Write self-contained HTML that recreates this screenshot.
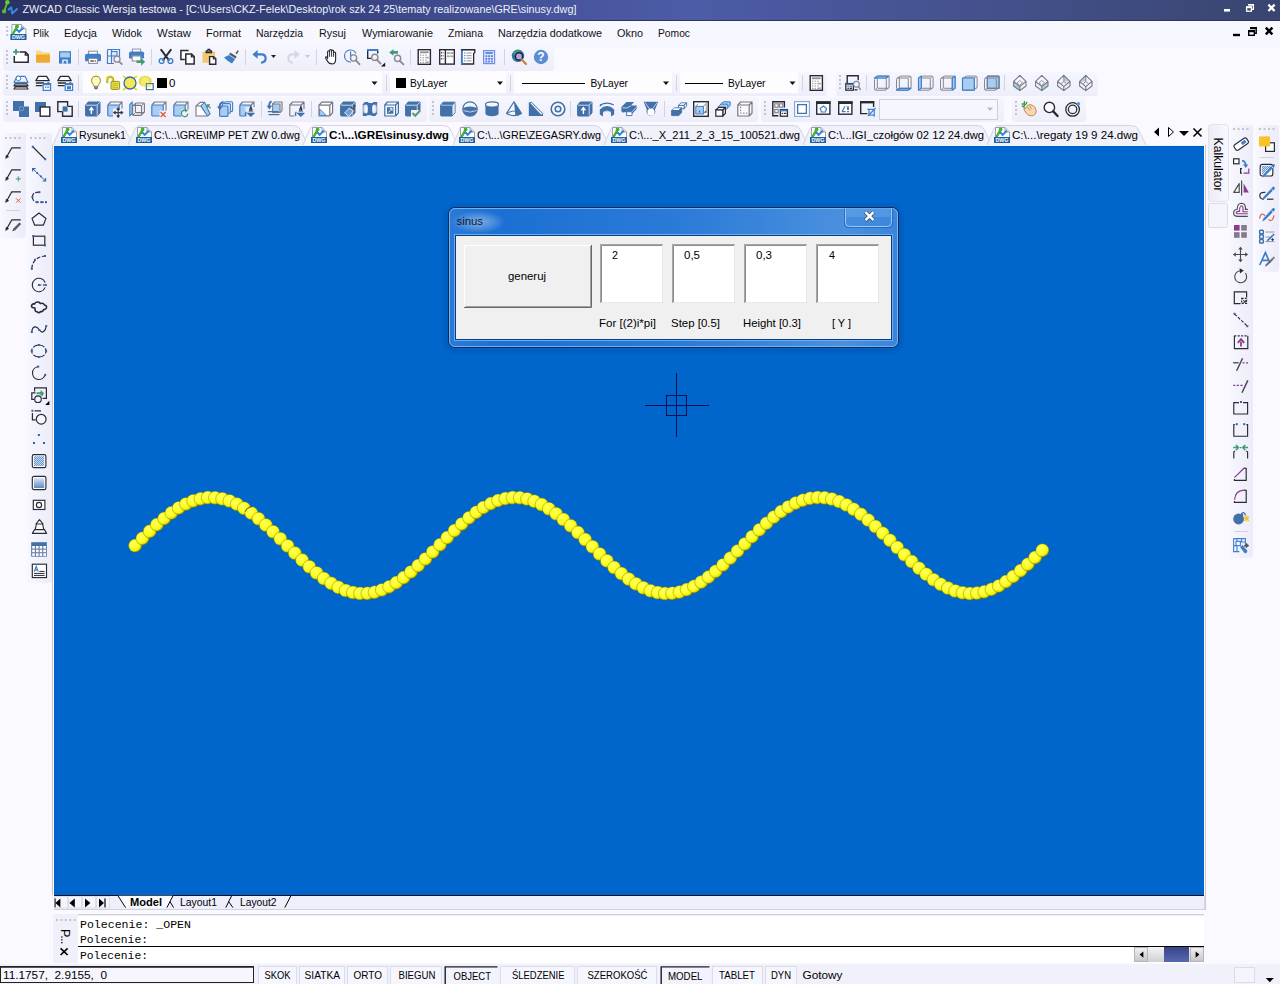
<!DOCTYPE html>
<html lang="pl"><head><meta charset="utf-8"><title>ZWCAD Classic - sinusy.dwg</title>
<style>
*{margin:0;padding:0;box-sizing:border-box}
html,body{width:1280px;height:984px;overflow:hidden;background:#f9f9ff;font-family:"Liberation Sans", sans-serif;font-size:11px}
#app{position:relative;width:1280px;height:984px;background:#f9f9ff;overflow:hidden}
#titlebar{position:absolute;left:0;top:0;width:1280px;height:21px;border-bottom:1px solid #2c3560;
  background:linear-gradient(90deg,#2a3262 0%,#333e78 22%,#45539a 42%,#4c5ca6 54%,#45528f 75%,#39456f 100%)}
#menubar{position:absolute;left:0;top:21px;width:1280px;height:26px;background:#f7f7ff}
.tb{position:absolute;background:#f0f0fb;border-radius:3px}
.tb.h{background:linear-gradient(180deg,#f6f6ff 0%,#eeeefa 100%)}
.tb.v{background:linear-gradient(90deg,#f7f7ff 0%,#ececf9 100%)}
#canvas{position:absolute;left:54px;top:146px;width:1150px;height:749px;background:#0066cc;
  border-top:1px solid #005cbe}
#overlay{position:absolute;left:0;top:0}
</style></head>
<body><div id="app">
<div id="titlebar"></div>
<div id="menubar"></div>
<div class="tb h" style="left:3px;top:46px;width:551px;height:25px;"></div>
<div class="tb h" style="left:3px;top:72px;width:824px;height:24px;"></div>
<div class="tb h" style="left:836px;top:72px;width:262px;height:24px;"></div>
<div class="tb h" style="left:3px;top:97px;width:424px;height:25px;"></div>
<div class="tb h" style="left:429px;top:97px;width:329px;height:25px;"></div>
<div class="tb h" style="left:761px;top:97px;width:243px;height:25px;"></div>
<div class="tb h" style="left:1012px;top:97px;width:74px;height:25px;"></div>
<div class="tb v" style="left:1px;top:133px;width:25px;height:105px;"></div>
<div class="tb v" style="left:27px;top:133px;width:25px;height:450px;"></div>
<div class="tb v" style="left:1230px;top:125px;width:23px;height:433px;"></div>
<div class="tb v" style="left:1256px;top:125px;width:23px;height:147px;"></div>
<div id="canvas"></div>
<svg id="overlay" width="1280" height="984" viewBox="0 0 1280 984">
<defs>
<radialGradient id="ball" cx="0.38" cy="0.36" r="0.70">
 <stop offset="0" stop-color="#ffff62"/><stop offset="0.5" stop-color="#ffff24"/>
 <stop offset="0.76" stop-color="#f0f010"/><stop offset="0.9" stop-color="#b4b010"/><stop offset="1" stop-color="#5c5a0e"/>
</radialGradient>
<linearGradient id="dlgframe" x1="0" y1="0" x2="1" y2="0">
 <stop offset="0" stop-color="#2a7ad8"/><stop offset="0.12" stop-color="#1c70d4"/><stop offset="0.5" stop-color="#2a7ad8"/>
 <stop offset="0.88" stop-color="#4a90de"/><stop offset="1" stop-color="#3a84da"/>
</linearGradient>
<linearGradient id="kal" x1="0" y1="0" x2="1" y2="0"><stop offset="0" stop-color="#ececf8"/><stop offset="1" stop-color="#f8f8ff"/></linearGradient>
<linearGradient id="sbbtn" x1="0" y1="0" x2="0" y2="1"><stop offset="0" stop-color="#f2f2f2"/><stop offset="1" stop-color="#c6c6ca"/></linearGradient>
<linearGradient id="sbtrack" x1="0" y1="0" x2="0" y2="1"><stop offset="0" stop-color="#f4f4f4"/><stop offset="1" stop-color="#d0d0d4"/></linearGradient>
<linearGradient id="sbthumb" x1="0" y1="0" x2="0" y2="1"><stop offset="0" stop-color="#37448a"/><stop offset="1" stop-color="#5868b0"/></linearGradient>
<radialGradient id="glow" cx="0.5" cy="0.5" r="0.5">
 <stop offset="0" stop-color="#fff" stop-opacity="0.42"/><stop offset="0.6" stop-color="#fff" stop-opacity="0.18"/><stop offset="1" stop-color="#fff" stop-opacity="0"/>
</radialGradient>
</defs>
<text x="22.4" y="13" font-size="11.5" fill="#eef0f8" font-weight="normal" font-family='"Liberation Sans", sans-serif' text-anchor="start" textLength="554" lengthAdjust="spacingAndGlyphs" >ZWCAD Classic Wersja testowa - [C:\Users\CKZ-Felek\Desktop\rok szk 24 25\tematy realizowane\GRE\sinusy.dwg]</text>
<g transform="translate(2,1)"><path d="M6.6 8.6 L9.2 6.3 L10.2 12.4 L15 8" fill="none" stroke="#2f8ae0" stroke-width="2" stroke-linejoin="round" stroke-linecap="round"/><path d="M2.2 10.2 L5.2 1.6" stroke="#62c030" stroke-width="1.8" stroke-linecap="round"/><circle cx="5.4" cy="1.3" r="2.2" fill="#6cc832"/><circle cx="2.1" cy="10.4" r="2.1" fill="#5cbc2c"/></g>
<rect x="1224" y="9" width="6" height="2.6" fill="#fff" rx="0" />
<path d="M1248.6 4.6 H1253.4 V9.4 H1251.6" fill="none" stroke="#fff" stroke-width="1.3" />
<rect x="1248" y="4" width="6" height="1.6" fill="#fff" rx="0" />
<rect x="1246.6" y="7" width="4.8" height="4.2" fill="none" stroke="#fff" stroke-width="1.3" rx="0" />
<rect x="1246" y="6.4" width="6" height="1.8" fill="#fff" rx="0" />
<path d="M1268.4 4.6 L1274.6 11 M1274.6 4.6 L1268.4 11" fill="none" stroke="#fff" stroke-width="2.3" />
<rect x="6.2" y="26" width="2" height="2" fill="#c3c3cd" rx="0" />
<rect x="6.2" y="30" width="2" height="2" fill="#c3c3cd" rx="0" />
<rect x="6.2" y="34" width="2" height="2" fill="#c3c3cd" rx="0" />
<g transform="translate(10.4,24)"><path d="M1.5 0.5 h9.5 l4.5 4.5 v10.5 h-14z" fill="#fff" stroke="#9aa0ad" stroke-width="1"/><path d="M11 0.5 v4.5 h4.5" fill="#e4e7ee" stroke="#9aa0ad" stroke-width="1"/><path d="M2.5 9.5 L6 4.5 L8.5 8 L13 3.5" fill="none" stroke="#2f86d8" stroke-width="1.8" stroke-linejoin="round"/><path d="M2.8 9.5 L6 3.5" stroke="#48b02c" stroke-width="2.2" stroke-linecap="round"/><circle cx="6.6" cy="2.4" r="1.9" fill="#48b02c"/><rect x="0" y="10" width="16" height="6" fill="#1c5fa6"/><text x="8" y="15.3" font-size="6.2" font-weight="bold" fill="#fff" text-anchor="middle" font-family='"Liberation Sans", sans-serif' textLength="13" lengthAdjust="spacingAndGlyphs">DWG</text></g>
<text x="33" y="37" font-size="11.5" fill="#111" font-weight="normal" font-family='"Liberation Sans", sans-serif' text-anchor="start" textLength="16" lengthAdjust="spacingAndGlyphs" >Plik</text>
<text x="64" y="37" font-size="11.5" fill="#111" font-weight="normal" font-family='"Liberation Sans", sans-serif' text-anchor="start" textLength="33" lengthAdjust="spacingAndGlyphs" >Edycja</text>
<text x="112" y="37" font-size="11.5" fill="#111" font-weight="normal" font-family='"Liberation Sans", sans-serif' text-anchor="start" textLength="30" lengthAdjust="spacingAndGlyphs" >Widok</text>
<text x="157" y="37" font-size="11.5" fill="#111" font-weight="normal" font-family='"Liberation Sans", sans-serif' text-anchor="start" textLength="34" lengthAdjust="spacingAndGlyphs" >Wstaw</text>
<text x="206" y="37" font-size="11.5" fill="#111" font-weight="normal" font-family='"Liberation Sans", sans-serif' text-anchor="start" textLength="35" lengthAdjust="spacingAndGlyphs" >Format</text>
<text x="256" y="37" font-size="11.5" fill="#111" font-weight="normal" font-family='"Liberation Sans", sans-serif' text-anchor="start" textLength="47" lengthAdjust="spacingAndGlyphs" >Narzędzia</text>
<text x="319" y="37" font-size="11.5" fill="#111" font-weight="normal" font-family='"Liberation Sans", sans-serif' text-anchor="start" textLength="27" lengthAdjust="spacingAndGlyphs" >Rysuj</text>
<text x="362" y="37" font-size="11.5" fill="#111" font-weight="normal" font-family='"Liberation Sans", sans-serif' text-anchor="start" textLength="71" lengthAdjust="spacingAndGlyphs" >Wymiarowanie</text>
<text x="448" y="37" font-size="11.5" fill="#111" font-weight="normal" font-family='"Liberation Sans", sans-serif' text-anchor="start" textLength="35" lengthAdjust="spacingAndGlyphs" >Zmiana</text>
<text x="498" y="37" font-size="11.5" fill="#111" font-weight="normal" font-family='"Liberation Sans", sans-serif' text-anchor="start" textLength="104" lengthAdjust="spacingAndGlyphs" >Narzędzia dodatkowe</text>
<text x="617" y="37" font-size="11.5" fill="#111" font-weight="normal" font-family='"Liberation Sans", sans-serif' text-anchor="start" textLength="26" lengthAdjust="spacingAndGlyphs" >Okno</text>
<text x="658" y="37" font-size="11.5" fill="#111" font-weight="normal" font-family='"Liberation Sans", sans-serif' text-anchor="start" textLength="32" lengthAdjust="spacingAndGlyphs" >Pomoc</text>
<rect x="1233" y="33.8" width="7" height="2.4" fill="#000" rx="0" />
<path d="M1250.6 27.8 H1256.2 V33.2 H1254.4" fill="none" stroke="#000" stroke-width="1.4" />
<rect x="1250" y="27" width="7" height="2.2" fill="#000" rx="0" />
<rect x="1248.7" y="30.7" width="5.6" height="4.6" fill="none" stroke="#000" stroke-width="1.4" rx="0" />
<rect x="1248" y="30" width="7" height="2.2" fill="#000" rx="0" />
<path d="M1265.8 27.6 L1272.4 34.4 M1272.4 27.6 L1265.8 34.4" fill="none" stroke="#000" stroke-width="2.5" />
<rect x="6" y="50" width="2" height="2" fill="#c3c3cd" rx="0" />
<rect x="6" y="54" width="2" height="2" fill="#c3c3cd" rx="0" />
<rect x="6" y="58" width="2" height="2" fill="#c3c3cd" rx="0" />
<rect x="6" y="62" width="2" height="2" fill="#c3c3cd" rx="0" />
<g transform="translate(13,49)"><path d="M6.5 3 H12.5 L15.2 5.7 V13.3 H1.3 V7" fill="#fff" stroke="#2a2a34" stroke-width="1.5"/><path d="M12.3 3 V6 H15.2" fill="none" stroke="#2a2a34" stroke-width="1.3"/><path d="M3 0 V5.6 M0.2 2.8 H5.8" stroke="#3f9d70" stroke-width="1.8"/></g>
<g transform="translate(35,49)"><path d="M1 2.4 q0-1 1-1 h3.6 l1.6 1.8 h6.8 q1 0 1 1 V13 H1z" fill="#fbd88a"/><path d="M1 5.6 h14 v7 q0 1.2-1.2 1.2 H2.2 q-1.2 0-1.2-1.2z" fill="#eea92f"/></g>
<g transform="translate(57,49)"><rect x="2" y="2.2" width="12" height="12.4" fill="#3f7fca"/><rect x="3.2" y="3.4" width="9.6" height="5" fill="#a9ccf2"/><rect x="5.2" y="10.6" width="5.6" height="4" fill="#f4f6fc"/><rect x="6.6" y="11.8" width="2.8" height="2.8" fill="#3f7fca"/></g>
<rect x="78" y="49" width="1" height="16" fill="#d3d3de" rx="0" />
<g transform="translate(85,49)"><rect x="3.6" y="2.2" width="8.8" height="5" fill="#fff" stroke="#8a8a94" stroke-width="1"/><path d="M0 6.6 q0-1.8 2-1.8 h12 q2 0 2 1.8 v4.6 q0 1-1 1 h-14 q-1 0-1-1z" fill="#3f7fca"/><rect x="3.6" y="9.4" width="8.8" height="5" fill="#fff" stroke="#8a8a94" stroke-width="1"/><rect x="5.4" y="11.4" width="3.4" height="1.2" fill="#2a2a34"/><rect x="9.6" y="11.4" width="1.2" height="1.2" fill="#2a2a34"/></g>
<g transform="translate(107,49)"><path d="M0.5 0.5 h12 v8 M7 14.5 h-6.5 v-14 M4.5 0.5 v14 M0.5 7 h4" fill="none" stroke="#3f7fca" stroke-width="1.2"/><rect x="4.5" y="2.5" width="5.5" height="4.5" fill="#d9e8fa" stroke="#3f7fca" stroke-width="1.1"/><circle cx="10" cy="10.2" r="3" fill="#f2f4fb" stroke="#8a8a94" stroke-width="1.3"/><path d="M12.2 12.6 L15.4 15.6" stroke="#8a8a94" stroke-width="1.8"/></g>
<g transform="translate(129,49)"><g transform="translate(0,-2) scale(0.94)"><rect x="3.6" y="2.2" width="8.8" height="5" fill="#fff" stroke="#8a8a94" stroke-width="1"/><path d="M0 6.6 q0-1.8 2-1.8 h12 q2 0 2 1.8 v4.6 q0 1-1 1 h-14 q-1 0-1-1z" fill="#3f7fca"/><rect x="3.6" y="9.4" width="8.8" height="5" fill="#fff" stroke="#8a8a94" stroke-width="1"/><rect x="5.4" y="11.4" width="3.4" height="1.2" fill="#2a2a34"/><rect x="9.6" y="11.4" width="1.2" height="1.2" fill="#2a2a34"/></g><rect x="3.2" y="7" width="8.6" height="5" fill="#fff" stroke="#8a8a94" stroke-width="1"/><path d="M7.5 11.5 h4.6 v-2.6 l4 3.9 l-4 3.9 v-2.6 h-4.6z" fill="#3f9d70"/></g>
<rect x="151" y="49" width="1" height="16" fill="#d3d3de" rx="0" />
<g transform="translate(158,49)"><path d="M3.2 0.8 L10.8 11 M12.8 0.8 L5.2 11" stroke="#2a2a34" stroke-width="2" stroke-linecap="round"/><circle cx="3.6" cy="12" r="2.4" fill="none" stroke="#3f7fca" stroke-width="1.4"/><circle cx="12.4" cy="12" r="2.4" fill="none" stroke="#3f7fca" stroke-width="1.4"/></g>
<g transform="translate(180,49)"><path d="M8.6 1.6 H0.9 V10.6 H4.8" fill="#fff" stroke="#2a2a34" stroke-width="1.5"/><path d="M5.8 5 H11.6 L14.2 7.6 V15 H5.8z" fill="#fff" stroke="#2a2a34" stroke-width="1.5"/><path d="M11.4 5 V7.8 H14.2" fill="none" stroke="#2a2a34" stroke-width="1.2"/></g>
<g transform="translate(202,49)"><rect x="0.5" y="2.4" width="12.6" height="11.4" rx="0.8" fill="#f3c873"/><path d="M4.4 3.6 V1.8 H6 V0.4 H7.8 V1.8 H9.4 V3.6z" fill="none" stroke="#2a2a34" stroke-width="1.3"/><rect x="3.6" y="2.6" width="6.6" height="1.4" fill="#2a2a34"/><path d="M7.6 7.6 H11.6 L13.8 9.8 V15.2 H7.6z" fill="#fff" stroke="#2a2a34" stroke-width="1.4"/><path d="M11.4 7.6 V10 H13.8" fill="none" stroke="#2a2a34" stroke-width="1.1"/></g>
<g transform="translate(224,49)"><path d="M11.4 4.2 L13.6 1.2 L14.8 2 L12.8 5.2z" fill="#55555f"/><path d="M6.2 3.6 L12.6 7.6 L11.6 9.4 L5.2 5.4z" fill="#55555f"/><path d="M4.8 6 L11.2 10 L8 14.6 Q4 13 0 8.6z" fill="#3f7fca"/></g>
<rect x="245" y="49" width="1" height="16" fill="#d3d3de" rx="0" />
<g transform="translate(252,49)"><path d="M3 5.4 H9.4 Q13.6 5.4 13.6 9.6 Q13.6 13.4 9 13.6" fill="none" stroke="#3f7fca" stroke-width="2.2"/><path d="M0.4 5.4 L5.6 1 V9.8z" fill="#3f7fca"/></g>
<g transform="translate(286,49)"><path d="M11 5.4 H6.6 Q2.4 5.4 2.4 9.6 Q2.4 13.4 7 13.6" fill="none" stroke="#d5d8e2" stroke-width="2.2"/><path d="M13.8 5.4 L8.6 1 V9.8z" fill="#d5d8e2"/></g>
<rect x="316" y="49" width="1" height="16" fill="#d3d3de" rx="0" />
<g transform="translate(323,49)"><path d="M4.6 9.6 V2.7 a1 1 0 0 1 2 0 V1.5 a1 1 0 0 1 2 0 V2.1 a1 1 0 0 1 2 0 V4 a1 1 0 0 1 2 0 V10.4 Q12.6 14.9 8.8 14.9 Q6 14.9 4.6 12.4 L2.7 9.2 Q2.3 8 3.3 7.7 Q4.1 7.7 4.6 9.6z" fill="#fff" stroke="#2a2a34" stroke-width="1.15" stroke-linejoin="round"/><path d="M6.6 2.7 V7.8 M8.6 1.8 V7.8 M10.6 4 V7.8" stroke="#2a2a34" stroke-width="0.95"/></g>
<g transform="translate(345,49)"><path d="M6 13 A6 6 0 1 1 11 4.6" fill="none" stroke="#3f7fca" stroke-width="1.2"/><path d="M5.6 2.6 V7 H8" fill="none" stroke="#3f7fca" stroke-width="1.2"/><circle cx="8.6" cy="9" r="3.1" fill="#f3f4fb" stroke="#8a8a94" stroke-width="1.4"/><path d="M10.9 11.4 L14.4 15.2" stroke="#8a8a94" stroke-width="1.9" stroke-linecap="round"/></g>
<g transform="translate(367,49)"><rect x="0" y="0" width="11.4" height="2" fill="#3f7fca"/><path d="M0.7 2 V9.4 H4.2 M10.7 2 V4.4" fill="none" stroke="#2a2a34" stroke-width="1.4"/><circle cx="7.8" cy="8.4" r="3.1" fill="#f3f4fb" stroke="#8a8a94" stroke-width="1.4"/><path d="M10.1 10.8 L13.6 14.6" stroke="#8a8a94" stroke-width="1.9" stroke-linecap="round"/></g>
<g transform="translate(389,49)"><path d="M0.2 3.4 L4.4 0 V2 H9 V4.8 H4.4 V6.8z" fill="#3f9d70"/><circle cx="8.6" cy="9.4" r="3.1" fill="#f3f4fb" stroke="#8a8a94" stroke-width="1.4"/><path d="M10.9 11.8 L14.4 15.4" stroke="#8a8a94" stroke-width="1.9" stroke-linecap="round"/></g>
<rect x="410" y="49" width="1" height="16" fill="#d3d3de" rx="0" />
<g transform="translate(417,49)"><rect x="1.2" y="0.7" width="12.2" height="14.6" fill="#fff" stroke="#2a2a34" stroke-width="1.4"/><rect x="3" y="2.4" width="8.6" height="1.8" fill="#8d8d95"/><rect x="3" y="5.6" width="1.4" height="1.2" fill="#a4a4ac"/><rect x="5.6" y="5.6" width="1.4" height="1.2" fill="#a4a4ac"/><rect x="8.2" y="5.6" width="1.4" height="1.2" fill="#a4a4ac"/><rect x="3" y="8" width="1.4" height="1.2" fill="#a4a4ac"/><rect x="5.6" y="8" width="1.4" height="1.2" fill="#a4a4ac"/><rect x="8.2" y="8" width="1.4" height="1.2" fill="#a4a4ac"/><rect x="3" y="10.4" width="1.4" height="1.2" fill="#a4a4ac"/><rect x="5.6" y="10.4" width="1.4" height="1.2" fill="#a4a4ac"/><rect x="8.2" y="10.4" width="1.4" height="1.2" fill="#a4a4ac"/><rect x="3" y="12.8" width="1.4" height="1.2" fill="#a4a4ac"/><rect x="5.6" y="12.8" width="1.4" height="1.2" fill="#a4a4ac"/><rect x="8.2" y="12.8" width="1.4" height="1.2" fill="#a4a4ac"/><rect x="9.2" y="7.8" width="2.6" height="1.6" fill="#a4a4ac"/><rect x="9.2" y="12.4" width="2.6" height="1.6" fill="#a4a4ac"/></g>
<g transform="translate(439,49)"><rect x="0.7" y="0.7" width="14.6" height="14.4" fill="#fff" stroke="#2a2a34" stroke-width="1.4"/><path d="M6.4 0.7 V15" stroke="#2a2a34" stroke-width="1.4"/><rect x="8" y="3.2" width="2.8" height="1.8" fill="#a4a4ac"/><rect x="11.4" y="3.2" width="2.8" height="1.8" fill="#a4a4ac"/><rect x="8" y="6.4" width="2.8" height="1.8" fill="#a4a4ac"/><rect x="11.4" y="6.4" width="2.8" height="1.8" fill="#a4a4ac"/><rect x="2" y="3.2" width="1.4" height="1.2" fill="#2a2a34"/><rect x="4" y="3.2" width="1.4" height="1.2" fill="#a4a4ac"/><rect x="2" y="6.2" width="1.4" height="1.2" fill="#2a2a34"/><rect x="4" y="6.2" width="1.4" height="1.2" fill="#a4a4ac"/><rect x="2" y="9.2" width="1.4" height="1.2" fill="#2a2a34"/><rect x="4" y="9.2" width="1.4" height="1.2" fill="#a4a4ac"/></g>
<g transform="translate(461,49)"><path d="M0.6 0.6 H13.8 V3.4 L12.6 4.6 V15 H0.6z" fill="#fff" stroke="#2a2a34" stroke-width="1.3"/><rect x="0" y="0" width="1.8" height="15.6" fill="#3f7fca"/><rect x="0" y="0" width="14" height="1.4" fill="#2a2a34"/><rect x="3.2" y="3.4" width="1.2" height="1.2" fill="#3f7fca"/><rect x="5.6" y="3.4" width="5" height="1.2" fill="#a4a4ac"/><rect x="3.2" y="6" width="1.2" height="1.2" fill="#3f7fca"/><rect x="5.6" y="6" width="5" height="1.2" fill="#a4a4ac"/><rect x="3.2" y="8.6" width="1.2" height="1.2" fill="#3f7fca"/><rect x="5.6" y="8.6" width="5" height="1.2" fill="#a4a4ac"/><rect x="3.2" y="11.2" width="1.2" height="1.2" fill="#3f7fca"/><rect x="5.6" y="11.2" width="5" height="1.2" fill="#a4a4ac"/></g>
<g transform="translate(483,49)"><rect x="0.6" y="1.6" width="11" height="13" fill="#dfe6fb" stroke="#6f8fe0" stroke-width="1.2"/><rect x="2.4" y="3.2" width="7.4" height="1.6" fill="#4f74d8"/><rect x="2.4" y="6.2" width="1.9" height="1.9" fill="#5f83e0"/><rect x="5.15" y="6.2" width="1.9" height="1.9" fill="#5f83e0"/><rect x="7.9" y="6.2" width="1.9" height="1.9" fill="#5f83e0"/><rect x="2.4" y="8.9" width="1.9" height="1.9" fill="#5f83e0"/><rect x="5.15" y="8.9" width="1.9" height="1.9" fill="#5f83e0"/><rect x="7.9" y="8.9" width="1.9" height="1.9" fill="#5f83e0"/><rect x="2.4" y="11.6" width="1.9" height="1.9" fill="#5f83e0"/><rect x="5.15" y="11.6" width="1.9" height="1.9" fill="#5f83e0"/><rect x="7.9" y="11.6" width="1.9" height="1.9" fill="#5f83e0"/></g>
<rect x="504" y="49" width="1" height="16" fill="#d3d3de" rx="0" />
<g transform="translate(511,49)"><circle cx="7" cy="6.8" r="6.2" fill="#2e6fc4"/><path d="M2 4 Q5 0.4 9.4 1.2 Q6.4 3.4 5.2 6.8 Q3.2 6.6 2 4z" fill="#3eaa5b"/><path d="M1.2 8.6 Q3.6 11.4 7 12.6 Q3.2 13.4 1.2 8.6z" fill="#36a05a"/><circle cx="8" cy="7.4" r="3.6" fill="#b8a4dc" stroke="#22243a" stroke-width="1.5"/><path d="M10.6 10.4 L15 15" stroke="#c9823a" stroke-width="2.2" stroke-linecap="round"/></g>
<g transform="translate(533,49)"><circle cx="8" cy="8" r="7.2" fill="#5a8ed0"/><text x="8" y="12.4" font-size="12" font-weight="bold" fill="#fff" text-anchor="middle" font-family='"Liberation Sans", sans-serif'>?</text></g>
<path d="M271 55 h5 l-2.5 3z" fill="#222" />
<path d="M305 55 h5 l-2.5 3z" fill="#c3c6d3" />
<path d="M381 66.6 H385.2 V62.4z" fill="#111" />
<rect x="6" y="75" width="2" height="2" fill="#c3c3cd" rx="0" />
<rect x="6" y="79" width="2" height="2" fill="#c3c3cd" rx="0" />
<rect x="6" y="83" width="2" height="2" fill="#c3c3cd" rx="0" />
<rect x="6" y="87" width="2" height="2" fill="#c3c3cd" rx="0" />
<g transform="translate(13,75)"><path d="M3.8 1.4 H12.2 L15 7.4 H1z" fill="#eef4fd" stroke="#3f7fca" stroke-width="1.1" stroke-linejoin="round"/><circle cx="5.4" cy="3.4" r="2.3" fill="#fff" stroke="#3f7fca" stroke-width="1"/><path d="M2.2 8.8 H13.8 L15 10.8 H1z M2.2 12 H13.8 L15 14 H1z" fill="#fff" stroke="#2a2a34" stroke-width="1.2" stroke-linejoin="round"/></g>
<g transform="translate(35,75)"><path d="M3.4 1.4 H11.6 L14.2 5.6 H0.8z" fill="#fff" stroke="#2a2a34" stroke-width="1.3" stroke-linejoin="round"/><path d="M0.8 8 H9 M0.8 10.6 H7.6" stroke="#2a2a34" stroke-width="1.4"/><path d="M12.4 8 H14.2" stroke="#2a2a34" stroke-width="1.4"/><rect x="8.2" y="8.6" width="7.4" height="6.8" fill="#f3f7fd" stroke="#3f7fca" stroke-width="1.2"/><rect x="8.2" y="8.6" width="7.4" height="1.6" fill="#3f7fca"/><rect x="10" y="11.6" width="1.4" height="1.2" fill="#3f7fca"/><rect x="12.2" y="11.6" width="2" height="1.2" fill="#3f7fca"/></g>
<g transform="translate(57,75)"><path d="M3.4 1.4 H11.6 L14.2 5.6 H0.8z" fill="#fff" stroke="#2a2a34" stroke-width="1.3" stroke-linejoin="round"/><path d="M0.8 8 H9 M0.8 10.6 H7.6" stroke="#2a2a34" stroke-width="1.4"/><path d="M12.4 8 H14.2" stroke="#2a2a34" stroke-width="1.4"/><rect x="8.2" y="8.6" width="7.4" height="6.8" fill="#f3f7fd" stroke="#3f7fca" stroke-width="1.2"/><rect x="8.2" y="8.6" width="7.4" height="1.6" fill="#3f7fca"/><rect x="10" y="11.2" width="4" height="3" fill="#3f7fca"/></g>
<rect x="78" y="75" width="1" height="16" fill="#d3d3de" rx="0" />
<rect x="83" y="71.5" width="299" height="21.5" fill="#fdfdff" rx="0" />
<g transform="translate(88,75)"><path d="M8 1.2 Q12.4 1.2 12.4 5.6 Q12.4 7.8 10.6 9.6 L10 11.4 H6 L5.4 9.6 Q3.6 7.8 3.6 5.6 Q3.6 1.2 8 1.2z" fill="#fdfbc0" stroke="#8f8a20" stroke-width="1"/><rect x="6" y="11.6" width="4" height="1.2" fill="#6d6d7c"/><rect x="6.4" y="13" width="3.2" height="1.2" fill="#5b5b9c"/></g>
<g transform="translate(105,75)"><path d="M2 8 V4.6 Q2 1.6 5 1.6 Q8 1.6 8 4.6 V7" fill="none" stroke="#d8cf2c" stroke-width="2.2"/><path d="M2 8 V4.6 Q2 1.6 5 1.6 Q8 1.6 8 4.6 V7" fill="none" stroke="#8c8420" stroke-width="0.5" transform="translate(0.9,0.6)"/><rect x="6" y="6.4" width="8.6" height="8" rx="1" fill="#e8e048" stroke="#8c8420" stroke-width="0.9"/><path d="M7.4 8.6 H13 M7.4 10.6 H13 M7.4 12.6 H13" stroke="#bdb42c" stroke-width="0.9"/></g>
<g transform="translate(122,75)"><path d="M1 1 L4 3 M15 1 L12 3 M1 15 L4 13 M15 15 L12 13" stroke="#e0d838" stroke-width="1.6"/><circle cx="8" cy="8" r="6" fill="#f4e858" stroke="#3a6c9c" stroke-width="1.3"/></g>
<g transform="translate(139,75)"><path d="M6.6 0.4 l1 1.6 1-1.6 1.2 1.4 1.4-1 0.6 1.8 1.6-0.4 -0.2 1.8 1.8 0.2 -1 1.6 1.6 1 -1.6 1 1 1.6 -1.8 0.2 0.2 1.8 -1.6-0.4 -0.6 1.8 -1.4-1 -1.2 1.4 -1-1.6 -1 1.6 -1.2-1.4 -1.4 1 -0.6-1.8 -1.6 0.4 0.2-1.8 -1.8-0.2 1-1.6 -1.6-1 1.6-1 -1-1.6 1.8-0.2 -0.2-1.8 1.6 0.4 0.6-1.8 1.4 1z" fill="#e4da48" transform="translate(-0.8,0) scale(0.92)"/><circle cx="6.2" cy="6.6" r="4.4" fill="#f4ea70"/><rect x="7.4" y="8.6" width="6.8" height="6" fill="#fff" stroke="#3a6c9c" stroke-width="1.2"/><path d="M7.4 8.6 h4.4 v3.6 h-4.4z" fill="#e4da48" opacity="0.55"/></g>
<rect x="157" y="78" width="10" height="10" fill="#000" rx="0" />
<text x="169" y="86.6" font-size="11.5" fill="#000" font-weight="normal" font-family='"Liberation Sans", sans-serif' text-anchor="start" >0</text>
<path d="M371.5 81.5 h6 l-3 3.5z" fill="#111" />
<rect x="386" y="75" width="1" height="16" fill="#d3d3de" rx="0" />
<rect x="390" y="71.5" width="116" height="21.5" fill="#fdfdff" rx="0" />
<rect x="396" y="78" width="10" height="10" fill="#000" rx="0" />
<text x="410" y="86.6" font-size="11.5" fill="#000" font-weight="normal" font-family='"Liberation Sans", sans-serif' text-anchor="start" textLength="37.5" lengthAdjust="spacingAndGlyphs" >ByLayer</text>
<path d="M497 81.5 h6 l-3 3.5z" fill="#111" />
<rect x="510" y="75" width="1" height="16" fill="#d3d3de" rx="0" />
<rect x="514" y="71.5" width="158" height="21.5" fill="#fdfdff" rx="0" />
<rect x="522" y="83" width="63" height="1" fill="#000" rx="0" />
<text x="590.5" y="86.6" font-size="11.5" fill="#000" font-weight="normal" font-family='"Liberation Sans", sans-serif' text-anchor="start" textLength="37.5" lengthAdjust="spacingAndGlyphs" >ByLayer</text>
<path d="M663 81.5 h6 l-3 3.5z" fill="#111" />
<rect x="676" y="75" width="1" height="16" fill="#d3d3de" rx="0" />
<rect x="680" y="71.5" width="118" height="21.5" fill="#fdfdff" rx="0" />
<rect x="685" y="83" width="38" height="1" fill="#000" rx="0" />
<text x="728" y="86.6" font-size="11.5" fill="#000" font-weight="normal" font-family='"Liberation Sans", sans-serif' text-anchor="start" textLength="37.5" lengthAdjust="spacingAndGlyphs" >ByLayer</text>
<path d="M789.5 81.5 h6 l-3 3.5z" fill="#111" />
<rect x="802" y="75" width="1" height="16" fill="#d3d3de" rx="0" />
<g transform="translate(809,75)"><rect x="1.2" y="0.7" width="12.2" height="14.6" fill="#fff" stroke="#2a2a34" stroke-width="1.4"/><rect x="3" y="2.4" width="8.6" height="1.8" fill="#8d8d95"/><rect x="3" y="5.6" width="1.4" height="1.2" fill="#a4a4ac"/><rect x="5.6" y="5.6" width="1.4" height="1.2" fill="#a4a4ac"/><rect x="8.2" y="5.6" width="1.4" height="1.2" fill="#a4a4ac"/><rect x="3" y="8" width="1.4" height="1.2" fill="#a4a4ac"/><rect x="5.6" y="8" width="1.4" height="1.2" fill="#a4a4ac"/><rect x="8.2" y="8" width="1.4" height="1.2" fill="#a4a4ac"/><rect x="3" y="10.4" width="1.4" height="1.2" fill="#a4a4ac"/><rect x="5.6" y="10.4" width="1.4" height="1.2" fill="#a4a4ac"/><rect x="8.2" y="10.4" width="1.4" height="1.2" fill="#a4a4ac"/><rect x="3" y="12.8" width="1.4" height="1.2" fill="#a4a4ac"/><rect x="5.6" y="12.8" width="1.4" height="1.2" fill="#a4a4ac"/><rect x="8.2" y="12.8" width="1.4" height="1.2" fill="#a4a4ac"/><rect x="9.2" y="7.8" width="2.6" height="1.6" fill="#a4a4ac"/><rect x="9.2" y="12.4" width="2.6" height="1.6" fill="#a4a4ac"/></g>
<rect x="839" y="75" width="2" height="2" fill="#c3c3cd" rx="0" />
<rect x="839" y="79" width="2" height="2" fill="#c3c3cd" rx="0" />
<rect x="839" y="83" width="2" height="2" fill="#c3c3cd" rx="0" />
<rect x="839" y="87" width="2" height="2" fill="#c3c3cd" rx="0" />
<g transform="translate(845,75)"><path d="M2.2 8 V0.8 H13.2 V5.2" fill="none" stroke="#2a2a34" stroke-width="1.4"/><path d="M9.6 14.8 H12.4" stroke="#2a2a34" stroke-width="1.3"/><rect x="0.8" y="8.6" width="7.6" height="6.6" fill="#fff" stroke="#2a2a34" stroke-width="1.3"/><rect x="0.8" y="8.6" width="7.6" height="1.8" fill="#3f7fca"/><rect x="2.4" y="11.4" width="1.4" height="1" fill="#2a2a34"/><rect x="4.6" y="11.4" width="2.4" height="1" fill="#2a2a34"/><rect x="2.4" y="13" width="1.4" height="1" fill="#2a2a34"/><rect x="4.6" y="13" width="2.4" height="1" fill="#2a2a34"/><circle cx="11.4" cy="9.2" r="2.9" fill="#f4f5fb" stroke="#8a8a94" stroke-width="1.2"/><path d="M13.4 11.6 L15.6 14.8" stroke="#8a8a94" stroke-width="1.6"/></g>
<rect x="866" y="75" width="1" height="16" fill="#d3d3de" rx="0" />
<g transform="translate(874,75)"><rect x="3.3" y="1.1" width="11.8" height="12.200000000000001" rx="1.4" fill="none" stroke="#818189" stroke-width="0.95"/><rect x="0.5" y="3" width="11.8" height="12.2" rx="1.4" fill="none" stroke="#818189" stroke-width="0.95"/><path d="M0.9 3.4 L3.6999999999999997 1.5 M11.9 3.4 L14.7 1.5 M0.9 14.799999999999999 L3.6999999999999997 12.9 M11.9 14.799999999999999 L14.7 12.9" fill="none" stroke="#818189" stroke-width="0.8"/><path d="M0.5 3 L3.3 1.1 H15.1 L12.3 3z" fill="#a9ccf2" stroke="#3f7fca" stroke-width="1.2" stroke-linejoin="round"/></g>
<g transform="translate(896,75)"><rect x="3.3" y="1.1" width="11.8" height="12.200000000000001" rx="1.4" fill="none" stroke="#818189" stroke-width="0.95"/><rect x="0.5" y="3" width="11.8" height="12.2" rx="1.4" fill="none" stroke="#818189" stroke-width="0.95"/><path d="M0.9 3.4 L3.6999999999999997 1.5 M11.9 3.4 L14.7 1.5 M0.9 14.799999999999999 L3.6999999999999997 12.9 M11.9 14.799999999999999 L14.7 12.9" fill="none" stroke="#818189" stroke-width="0.8"/><path d="M0.5 15.2 L3.3 13.3 H15.1 L12.3 15.2z" fill="#a9ccf2" stroke="#3f7fca" stroke-width="1.2" stroke-linejoin="round"/></g>
<g transform="translate(918,75)"><rect x="3.3" y="1.1" width="11.8" height="12.200000000000001" rx="1.4" fill="none" stroke="#818189" stroke-width="0.95"/><rect x="0.5" y="3" width="11.8" height="12.2" rx="1.4" fill="none" stroke="#818189" stroke-width="0.95"/><path d="M0.9 3.4 L3.6999999999999997 1.5 M11.9 3.4 L14.7 1.5 M0.9 14.799999999999999 L3.6999999999999997 12.9 M11.9 14.799999999999999 L14.7 12.9" fill="none" stroke="#818189" stroke-width="0.8"/><path d="M0.5 3 L3.3 1.1 V13.3 L0.5 15.2z" fill="#a9ccf2" stroke="#3f7fca" stroke-width="1.2" stroke-linejoin="round"/></g>
<g transform="translate(940,75)"><rect x="3.3" y="1.1" width="11.8" height="12.200000000000001" rx="1.4" fill="none" stroke="#818189" stroke-width="0.95"/><rect x="0.5" y="3" width="11.8" height="12.2" rx="1.4" fill="none" stroke="#818189" stroke-width="0.95"/><path d="M0.9 3.4 L3.6999999999999997 1.5 M11.9 3.4 L14.7 1.5 M0.9 14.799999999999999 L3.6999999999999997 12.9 M11.9 14.799999999999999 L14.7 12.9" fill="none" stroke="#818189" stroke-width="0.8"/><path d="M12.3 3 L15.1 1.1 V13.3 L12.3 15.2z" fill="#a9ccf2" stroke="#3f7fca" stroke-width="1.2" stroke-linejoin="round"/></g>
<g transform="translate(962,75)"><rect x="3.3" y="1.1" width="11.8" height="12.200000000000001" rx="1.4" fill="none" stroke="#818189" stroke-width="0.95"/><rect x="0.5" y="3" width="11.8" height="12.2" rx="1.4" fill="none" stroke="#818189" stroke-width="0.95"/><path d="M0.9 3.4 L3.6999999999999997 1.5 M11.9 3.4 L14.7 1.5 M0.9 14.799999999999999 L3.6999999999999997 12.9 M11.9 14.799999999999999 L14.7 12.9" fill="none" stroke="#818189" stroke-width="0.8"/><path d="M0.5 3 H12.3 V15.2 H0.5z" fill="#a9ccf2" stroke="#3f7fca" stroke-width="1.2" stroke-linejoin="round"/></g>
<g transform="translate(984,75)"><path d="M3.3 1.1 H15.1 V13.3 H3.3z" fill="#a9ccf2" stroke="#3f7fca" stroke-width="1.2" stroke-linejoin="round"/><rect x="3.3" y="1.1" width="11.8" height="12.200000000000001" rx="1.4" fill="none" stroke="#818189" stroke-width="0.95"/><rect x="0.5" y="3" width="11.8" height="12.2" rx="1.4" fill="none" stroke="#818189" stroke-width="0.95"/><path d="M0.9 3.4 L3.6999999999999997 1.5 M11.9 3.4 L14.7 1.5 M0.9 14.799999999999999 L3.6999999999999997 12.9 M11.9 14.799999999999999 L14.7 12.9" fill="none" stroke="#818189" stroke-width="0.8"/></g>
<rect x="1004" y="75" width="1" height="16" fill="#d3d3de" rx="0" />
<g transform="translate(1012,75)"><path d="M1.6 6.4 L7.8 11.6 L7.8 15.6 L1.6 11z" fill="#a9ccf2"/><path d="M7.8 0.4 L14 6.4 L14 11 L7.8 15.6 L1.6 11 L1.6 6.4z M1.6 6.4 L7.8 11.6 L14 6.4 M7.8 11.6 L7.8 15.6" fill="none" stroke="#77777f" stroke-width="1.1" stroke-linejoin="round"/><path d="M7.8 5.4 L10.4 8 L7.8 10.2 L5.2 8z" fill="#fbfbff" stroke="#77777f" stroke-width="0.8"/></g>
<g transform="translate(1034,75)"><path d="M14 6.4 L7.8 11.6 L7.8 15.6 L14 11z" fill="#a9ccf2"/><path d="M7.8 0.4 L14 6.4 L14 11 L7.8 15.6 L1.6 11 L1.6 6.4z M1.6 6.4 L7.8 11.6 L14 6.4 M7.8 11.6 L7.8 15.6" fill="none" stroke="#77777f" stroke-width="1.1" stroke-linejoin="round"/><path d="M7.8 5.4 L10.4 8 L7.8 10.2 L5.2 8z" fill="#fbfbff" stroke="#77777f" stroke-width="0.8"/></g>
<g transform="translate(1056,75)"><path d="M7.8 0.4 L14 6.4 L7.8 6.6z" fill="#a9ccf2"/><path d="M7.8 0.4 L14 6.4 L14 11 L7.8 15.6 L1.6 11 L1.6 6.4z M1.6 6.4 L7.8 11.6 L14 6.4 M7.8 11.6 L7.8 15.6" fill="none" stroke="#77777f" stroke-width="1.1" stroke-linejoin="round"/><path d="M7.8 0.4 V6.6 M5.2 8.6 L7.8 6.6 L10.4 8.6" fill="none" stroke="#77777f" stroke-width="0.8"/></g>
<g transform="translate(1078,75)"><path d="M7.8 0.4 L1.6 6.4 L7.8 6.6z" fill="#a9ccf2"/><path d="M7.8 0.4 L14 6.4 L14 11 L7.8 15.6 L1.6 11 L1.6 6.4z M1.6 6.4 L7.8 11.6 L14 6.4 M7.8 11.6 L7.8 15.6" fill="none" stroke="#77777f" stroke-width="1.1" stroke-linejoin="round"/><path d="M7.8 0.4 V6.6 M5.2 8.6 L7.8 6.6 L10.4 8.6" fill="none" stroke="#77777f" stroke-width="0.8"/></g>
<rect x="6" y="101" width="2" height="2" fill="#c3c3cd" rx="0" />
<rect x="6" y="105" width="2" height="2" fill="#c3c3cd" rx="0" />
<rect x="6" y="109" width="2" height="2" fill="#c3c3cd" rx="0" />
<rect x="6" y="113" width="2" height="2" fill="#c3c3cd" rx="0" />
<g transform="translate(13,101)"><path d="M0 0 H11 V5.4 H16 V16 H6 V10 H0z" fill="#4270a8"/><path d="M6.6 5.8 H10.4 V9.6 H6.6z" fill="none" stroke="#7fa3cf" stroke-width="0.8"/></g>
<g transform="translate(35,101)"><rect x="0" y="1" width="11" height="10" fill="#4270a8"/><rect x="5.2" y="6" width="9.6" height="9.2" fill="#fff" stroke="#2a2a34" stroke-width="1.4"/></g>
<g transform="translate(57,101)"><path d="M10.6 5 V0.8 H0.8 V10.6 H5.6" fill="none" stroke="#2a2a34" stroke-width="1.4"/><path d="M5.6 10.6 V15.2 H15.2 V5.4 H10.6" fill="none" stroke="#2a2a34" stroke-width="1.4"/><rect x="5.6" y="5.4" width="5" height="5.2" fill="#4270a8"/></g>
<rect x="78" y="101" width="1" height="16" fill="#d3d3de" rx="0" />
<g transform="translate(85,101)"><path d="M0.6 4.2 L3.2 1 H15 V11.8 L12.2 15 H1.6 Q0.6 15 0.6 14z" fill="#4270a8" stroke="#4270a8" stroke-width="1" stroke-linejoin="round"/><path d="M1 4.2 H12.2 V14.6 M12.2 4.2 L14.8 1.2" fill="none" stroke="#dce7f5" stroke-width="0.9"/><path d="M6.4 13 V7.6 M4.4 9.4 L6.4 6.6 L8.4 9.4" fill="none" stroke="#fff" stroke-width="1.4"/></g>
<g transform="translate(107,101)"><path d="M0.8 4 L3.6 1 H15 V12 L12.2 15" fill="none" stroke="#77777f" stroke-width="1.1" stroke-linejoin="round"/><path d="M12.2 4 L15 1" stroke="#77777f" stroke-width="1.1"/><rect x="0.8" y="4" width="11.4" height="11" rx="1" fill="#a9ccf2" stroke="#3f7fca" stroke-width="1.2"/><rect x="6" y="7.6" width="10" height="9" fill="#f0f0fb"/><path d="M11.2 7.2 V16 M6.8 11.6 H15.6 M9.8 8.8 L11.2 7 L12.6 8.8 M9.8 14.4 L11.2 16.2 L12.6 14.4 M8.6 10.2 L6.8 11.6 L8.6 13 M13.8 10.2 L15.6 11.6 L13.8 13" fill="none" stroke="#3a3a44" stroke-width="1.2"/></g>
<g transform="translate(129,101)"><path d="M0.8 15 V3.6 L3.2 0.8 V12.4z" fill="#a9ccf2" stroke="#3f7fca" stroke-width="1.1" stroke-linejoin="round"/><rect x="6.4" y="2" width="9" height="9.6" rx="1.2" fill="none" stroke="#77777f" stroke-width="1.1"/><rect x="3.6" y="4.4" width="9" height="10" rx="1.2" fill="none" stroke="#77777f" stroke-width="1.1"/><path d="M3.8 4.6 L6.6 2.2 M12.6 4.6 L15.2 2.2 M12.6 14.2 L15.2 11.4 M3.8 14.2 L6.4 11.6" stroke="#77777f" stroke-width="1"/></g>
<g transform="translate(151,101)"><path d="M0.8 4 L3.6 1 H15 V12 L12.2 15" fill="none" stroke="#77777f" stroke-width="1.1" stroke-linejoin="round"/><path d="M12.2 4 L15 1" stroke="#77777f" stroke-width="1.1"/><rect x="0.8" y="4" width="11.4" height="11" rx="1" fill="#a9ccf2" stroke="#3f7fca" stroke-width="1.2"/><rect x="8.6" y="9.6" width="7.4" height="6.4" fill="#f0f0fb"/><path d="M9.6 11 L14.6 16 M14.6 11 L9.6 16" stroke="#e0583c" stroke-width="1.3"/></g>
<g transform="translate(173,101)"><path d="M0.8 4 L3.6 1 H15 V12 L12.2 15" fill="none" stroke="#77777f" stroke-width="1.1" stroke-linejoin="round"/><path d="M12.2 4 L15 1" stroke="#77777f" stroke-width="1.1"/><rect x="0.8" y="4" width="11.4" height="11" rx="1" fill="#a9ccf2" stroke="#3f7fca" stroke-width="1.2"/><rect x="8.4" y="8.6" width="7.6" height="7.4" fill="#f0f0fb"/><path d="M14.8 12.6 A3.2 3.2 0 1 1 12.6 9.4" fill="none" stroke="#3f9d70" stroke-width="1.3"/><path d="M12 7.6 L15 9.6 L12.2 11.4z" fill="#3f9d70"/></g>
<g transform="translate(195,101)"><path d="M1 15 V5 L5 1.4 H9.6 L15 13 L12.4 15z" fill="#fff" stroke="#77777f" stroke-width="1.1" stroke-linejoin="round"/><path d="M1 5 H5.6 L12.4 15 M5.6 5 L9.6 1.4" fill="none" stroke="#77777f" stroke-width="1"/><path d="M6 4.8 L9.6 1.6 L15 13 L12.4 14.8z" fill="#a9ccf2" stroke="#3f7fca" stroke-width="1"/><path d="M15.6 7.4 L12.4 4 M12.2 6.6 V3.8 H15" fill="none" stroke="#3f9d70" stroke-width="1.2"/></g>
<g transform="translate(217,101)"><rect x="7.6" y="0.8" width="8" height="9.6" rx="1" fill="#e4eefb" stroke="#3f7fca" stroke-width="1.1"/><rect x="5.4" y="2.6" width="8" height="9.6" rx="1" fill="#d8e6f8" stroke="#3f7fca" stroke-width="1.1"/><rect x="2.6" y="5" width="8.4" height="10.4" rx="1" fill="#a9ccf2" stroke="#3f7fca" stroke-width="1.2"/><path d="M6.6 1 Q2.4 1.6 2.6 6.2" fill="none" stroke="#4270a8" stroke-width="1.8"/><path d="M0 5.4 L2.8 9.2 L5.6 5.2z" fill="#4270a8"/></g>
<g transform="translate(239,101)"><path d="M0.8 4 L3.6 1 H15 V12 L12.2 15" fill="none" stroke="#77777f" stroke-width="1.1" stroke-linejoin="round"/><path d="M12.2 4 L15 1" stroke="#77777f" stroke-width="1.1"/><rect x="0.8" y="4" width="11.4" height="11" rx="1" fill="#a9ccf2" stroke="#3f7fca" stroke-width="1.2"/><rect x="6.4" y="6" width="9.6" height="10" fill="#f0f0fb" opacity="0.85"/><path d="M11.8 8.2 L15.8 12.2 L11.8 16 L7.8 12.2z" fill="#4270a8"/><path d="M10.4 9.4 L11.8 6 L13.2 9.4" fill="none" stroke="#2a2a34" stroke-width="1.2"/><path d="M8.4 11.2 H15.4" stroke="#fff" stroke-width="0.9"/><path d="M7.4 11 Q5.6 13 7 15" fill="none" stroke="#4270a8" stroke-width="1.3"/></g>
<rect x="261" y="101" width="1" height="16" fill="#d3d3de" rx="0" />
<g transform="translate(267,101)"><path d="M5.6 3 L7.6 1 H15 V9.6 L13 11.6" fill="none" stroke="#77777f" stroke-width="1.1"/><rect x="5.6" y="3" width="7.4" height="8.6" fill="#a9ccf2" stroke="#77777f" stroke-width="1"/><path d="M4.6 0.4 Q1.8 1.4 2.2 5.6" fill="none" stroke="#4270a8" stroke-width="1.8"/><path d="M-0.4 4.8 L2.4 8.6 L5.2 4.6z" fill="#4270a8"/><path d="M0.8 10.6 H11.6 M1.6 13.6 H12.4" stroke="#4270a8" stroke-width="1.4"/></g>
<g transform="translate(289,101)"><path d="M0.8 15 V4 L3.6 1 H15 V8 M12.2 4 L15 1 M0.8 4 H12.2 V7.4 M0.8 15 H5.4" fill="none" stroke="#77777f" stroke-width="1.1" stroke-linejoin="round"/><path d="M11.8 8.2 L15.8 12.2 L11.8 16 L7.8 12.2z" fill="#4270a8"/><path d="M10.4 9.4 L11.8 6 L13.2 9.4" fill="none" stroke="#2a2a34" stroke-width="1.2"/><path d="M8.4 11.2 H15.4" stroke="#fff" stroke-width="0.9"/><path d="M7.4 11 Q5.6 13 7 15" fill="none" stroke="#4270a8" stroke-width="1.3"/></g>
<rect x="311" y="101" width="1" height="16" fill="#d3d3de" rx="0" />
<g transform="translate(318,101)"><path d="M1 4.2 L3.8 1.2 H14.6 V11.6 L11.8 14.8 H1z M1 4.2 H11.8 V14.8 M11.8 4.2 L14.6 1.2" fill="#fff" stroke="#77777f" stroke-width="1.2" stroke-linejoin="round"/><path d="M1.6 8 L8.2 14.4 H1.6z" fill="#a9ccf2" stroke="#3f7fca" stroke-width="0.9"/></g>
<g transform="translate(340,101)"><path d="M0.6 4.2 L3.2 1 H15 V11.8 L12.2 15 H1.6 Q0.6 15 0.6 14z" fill="#4270a8" stroke="#4270a8" stroke-width="1" stroke-linejoin="round"/><path d="M1 4.2 H12.2 V14.6 M12.2 4.2 L14.8 1.2" fill="none" stroke="#dce7f5" stroke-width="0.9"/><path d="M10.6 6.4 L14.6 8.8 M13 6 L15.6 4.6" stroke="#4c4c54" stroke-width="1.6"/><path d="M9.4 7 L13.4 9.8 L9 15.4 L4.6 12z" fill="#6f9fd8" stroke="#fff" stroke-width="0.8"/></g>
<g transform="translate(362,101)"><path d="M0.8 3.2 L2.6 1 H6.4 V12.6 L4.6 15 H0.8z" fill="#4270a8"/><path d="M9.6 3.2 L11.4 1 H15.2 V12.6 L13.4 15 H9.6z" fill="#4270a8"/><rect x="4" y="2" width="8" height="12.2" fill="#4270a8"/><ellipse cx="4.2" cy="8" rx="1.7" ry="4.6" fill="#f0f0fb"/><ellipse cx="11.8" cy="8" rx="1.7" ry="4.6" fill="#f0f0fb"/><ellipse cx="2.2" cy="8" rx="0.8" ry="4.4" fill="#dce7f5"/><ellipse cx="13.8" cy="8" rx="0.8" ry="4.4" fill="#dce7f5"/></g>
<g transform="translate(384,101)"><path d="M0.8 4 L3.4 1 H14.4 V11.8 L11.6 15 H0.8z M0.8 4 H11.6 V15 M11.6 4 L14.4 1" fill="#f4f7fc" stroke="#4270a8" stroke-width="1.2" stroke-linejoin="round"/><rect x="3" y="6.2" width="6.4" height="6.6" fill="#4270a8"/><path d="M4.4 11.4 L8 7.6 M5.8 7.6 H8 V9.8" fill="none" stroke="#fff" stroke-width="0.9"/></g>
<g transform="translate(405,101)"><path d="M0.6 4.2 L3.2 1 H15 V11.8 L12.2 15 H1.6 Q0.6 15 0.6 14z" fill="#4270a8" stroke="#4270a8" stroke-width="1" stroke-linejoin="round"/><path d="M1 4.2 H12.2 V14.6 M12.2 4.2 L14.8 1.2" fill="none" stroke="#dce7f5" stroke-width="0.9"/><rect x="6" y="9" width="10" height="7" fill="#f0f0fb"/><path d="M7.4 12 L10.2 14.8 L15.4 9.2" fill="none" stroke="#5c9c74" stroke-width="2"/></g>
<rect x="432" y="101" width="2" height="2" fill="#c3c3cd" rx="0" />
<rect x="432" y="105" width="2" height="2" fill="#c3c3cd" rx="0" />
<rect x="432" y="109" width="2" height="2" fill="#c3c3cd" rx="0" />
<rect x="432" y="113" width="2" height="2" fill="#c3c3cd" rx="0" />
<g transform="translate(440,101)"><path d="M0.6 4.2 L3.2 1.2 H15 V11.8 L12.2 15 H1.6 Q0.6 15 0.6 14z" fill="#4270a8" stroke="#4270a8" stroke-width="1" stroke-linejoin="round"/><path d="M12.4 4.4 L14.8 1.6 V11.6 L12.4 14.4z" fill="#dfe8f4"/><path d="M1 4.2 H12.3" stroke="#dce7f5" stroke-width="0.7"/></g>
<g transform="translate(462,101)"><circle cx="8" cy="8" r="7.2" fill="#f4f7fc" stroke="#4270a8" stroke-width="1.2"/><path d="M0.9 8 A7.1 7.1 0 0 0 15.1 8 Q8 11.4 0.9 8z" fill="#4270a8"/><ellipse cx="8" cy="7.8" rx="7" ry="2.2" fill="#4270a8"/><path d="M1.6 9.6 Q8 12.6 14.4 9.6" fill="none" stroke="#dce7f5" stroke-width="0.8"/></g>
<g transform="translate(484,101)"><path d="M1.4 3.4 V12.6 A6.6 2.6 0 0 0 14.6 12.6 V3.4z" fill="#4270a8"/><ellipse cx="8" cy="3.4" rx="6.6" ry="2.6" fill="#f4f7fc" stroke="#4270a8" stroke-width="1.2"/></g>
<g transform="translate(506,101)"><path d="M8 0.8 L15.4 12.4 Q8 17 0.6 12.4z" fill="#f4f7fc" stroke="#4270a8" stroke-width="1.2" stroke-linejoin="round"/><path d="M8 0.8 L15.4 12.4 Q13 14.6 9.4 15z" fill="#4270a8"/><path d="M0.8 12.4 Q8 8.6 9.6 11" fill="none" stroke="#4270a8" stroke-width="1"/></g>
<g transform="translate(528,101)"><path d="M0.8 1.6 L3.4 1 L15 12.6 V15 H0.8z" fill="#4270a8"/><path d="M1.6 1.8 L3.4 1.2 L14.8 12.6 L13.4 14.2z" fill="#f4f7fc" stroke="#4270a8" stroke-width="0.8"/></g>
<g transform="translate(550,101)"><circle cx="8" cy="8" r="6.8" fill="#f4f7fc" stroke="#4270a8" stroke-width="1.6"/><circle cx="8" cy="8" r="2.8" fill="#f0f0fb" stroke="#4270a8" stroke-width="1.6"/></g>
<rect x="570" y="101" width="1" height="16" fill="#d3d3de" rx="0" />
<g transform="translate(577,101)"><path d="M0.6 4.2 L3.2 1 H15 V11.8 L12.2 15 H1.6 Q0.6 15 0.6 14z" fill="#4270a8" stroke="#4270a8" stroke-width="1" stroke-linejoin="round"/><path d="M1 4.2 H12.2 V14.6 M12.2 4.2 L14.8 1.2" fill="none" stroke="#dce7f5" stroke-width="0.9"/><path d="M6.4 13 V7.6 M4.4 9.4 L6.4 6.6 L8.4 9.4" fill="none" stroke="#fff" stroke-width="1.4"/></g>
<g transform="translate(599,101)"><path d="M1.2 4 Q8 0.4 14.8 4" fill="none" stroke="#4270a8" stroke-width="1.2"/><path d="M1 3 L0.6 5.4 L3 5z" fill="#4270a8"/><path d="M0.8 8.4 Q8 1.6 15.2 8.4 V13.6 L12 15.4 V11.6 Q8 8.8 4 11.6 V15.4 L0.8 13.6z" fill="#4270a8"/><path d="M4 11.4 Q8 8.4 12 11.4" fill="none" stroke="#dce7f5" stroke-width="0.8"/></g>
<g transform="translate(621,101)"><path d="M5.4 1 H13 L10 4.6 H15.6 V8 L11 13 V15 H5.2 V11 L2 11.4 Q0.4 11.4 0.4 9.8 V6z" fill="#4270a8"/><path d="M5.6 10.8 H11 V14.6 H5.6z" fill="#fff" stroke="#4270a8" stroke-width="0.8"/><path d="M11 10.8 L15.2 6.4 M1.4 6.8 L6 7 L9.8 4.8" fill="none" stroke="#dce7f5" stroke-width="0.8"/></g>
<g transform="translate(643,101)"><path d="M0.6 0.8 H15.2 L12 8.6 A4.4 4.4 0 1 1 3.8 8.6z" fill="#4270a8"/><circle cx="8" cy="11" r="3.6" fill="#fff"/><path d="M2 1.6 L6.6 8 M14 1.6 L9.4 8" stroke="#dce7f5" stroke-width="0.8"/></g>
<rect x="664" y="101" width="1" height="16" fill="#d3d3de" rx="0" />
<g transform="translate(671,101)"><path d="M7.4 4.4 L10 1.8 H15.6 L13 4.4z M13 4.4 L15.6 1.8 V5 L13 7.8z" fill="#fff" stroke="#4270a8" stroke-width="0.9" stroke-linejoin="round"/><rect x="7.4" y="4.4" width="5.6" height="3.4" fill="#fff" stroke="#4270a8" stroke-width="0.9"/><path d="M0.6 9.6 L3.6 6.8 H10.6 L7.8 9.6z" fill="#fff" stroke="#4270a8" stroke-width="0.9"/><path d="M0.6 9.6 H7.8 L10.6 6.8 V11.6 L7.8 14.6 H0.6z" fill="#4270a8" stroke="#4270a8" stroke-width="0.9" stroke-linejoin="round"/></g>
<g transform="translate(693,101)"><rect x="0.7" y="0.7" width="14.6" height="14.6" fill="#fff" stroke="#2a2a34" stroke-width="1.4"/><rect x="2.8" y="5.4" width="7.6" height="7.6" fill="#a9ccf2" stroke="#3f7fca" stroke-width="1"/><path d="M2.8 5.4 L5.4 2.6 M10.4 5.4 L13.2 2.4 M13.2 2.4 V10 L10.4 13" fill="none" stroke="#77777f" stroke-width="0.8"/><path d="M5.4 11.4 L6.6 8.4 L7.8 11.4z" fill="#3f7fca"/><rect x="11.6" y="10.4" width="2" height="1.2" fill="#2a2a34"/></g>
<g transform="translate(715,101)"><path d="M5.6 3 L8.4 0.8 H15.2 V4.6 L12.4 7 H5.6z" fill="#a9ccf2" stroke="#3f7fca" stroke-width="1"/><path d="M3.4 5.4 L6 3.2 H12.8 V7 L10.2 9.4 H3.4z" fill="#a9ccf2" stroke="#3f7fca" stroke-width="1"/><path d="M0.8 9 L3.6 6.4 H10.4 L7.8 9z M7.8 9 L10.4 6.4 V12.4 L7.8 15.2z" fill="#fff" stroke="#2a2a34" stroke-width="1.2" stroke-linejoin="round"/><rect x="0.8" y="9" width="7" height="6.2" fill="#fff" stroke="#2a2a34" stroke-width="1.2"/></g>
<g transform="translate(737,101)"><path d="M0.8 4 L3.6 1 H15 V12 L12.2 15 H0.8z M0.8 4 H12.2 V15 M12.2 4 L15 1" fill="#fbfbff" stroke="#77777f" stroke-width="1.2" stroke-linejoin="round"/><path d="M3.6 5.6 V12.2 H10.4" fill="none" stroke="#77777f" stroke-width="1" stroke-dasharray="1.6 1.4"/></g>
<rect x="764" y="101" width="2" height="2" fill="#c3c3cd" rx="0" />
<rect x="764" y="105" width="2" height="2" fill="#c3c3cd" rx="0" />
<rect x="764" y="109" width="2" height="2" fill="#c3c3cd" rx="0" />
<rect x="764" y="113" width="2" height="2" fill="#c3c3cd" rx="0" />
<g transform="translate(772,101)"><path d="M12.4 6.4 V0.8 H0.8 V14.8 H6.4" fill="none" stroke="#2a2a34" stroke-width="1.4"/><rect x="2.8" y="2.8" width="3.4" height="3.4" fill="none" stroke="#77777f" stroke-width="1"/><rect x="7.4" y="2.8" width="3.4" height="3.4" fill="none" stroke="#77777f" stroke-width="1"/><rect x="2.8" y="8.4" width="3.4" height="3.4" fill="none" stroke="#77777f" stroke-width="1"/><rect x="8.4" y="8.6" width="7" height="6.6" fill="#fff" stroke="#2a2a34" stroke-width="1.3"/><rect x="8.4" y="8.6" width="7" height="1.8" fill="#3f7fca"/><rect x="9.8" y="11.8" width="1.4" height="1.2" fill="#2a2a34"/><rect x="12" y="11.8" width="2.2" height="1.2" fill="#2a2a34"/></g>
<g transform="translate(794,101)"><rect x="0.6" y="0.6" width="14.8" height="14.8" fill="#fff" stroke="#7fa6d6" stroke-width="1.1"/><rect x="3.6" y="3.6" width="8.8" height="8.8" fill="#fff" stroke="#4270a8" stroke-width="1.3"/></g>
<g transform="translate(816,101)"><rect x="0.7" y="1" width="13.2" height="12.2" fill="#fff" stroke="#2a2a34" stroke-width="1.4"/><rect x="0" y="0.4" width="14.6" height="2.6" fill="#2a2a34"/><path d="M7.4 5 L10.6 7.4 L9.4 11 H5.4 L4.2 7.4z" fill="none" stroke="#3f7fca" stroke-width="1.2"/></g>
<g transform="translate(838,101)"><rect x="0.7" y="1" width="13.2" height="12.2" fill="#fff" stroke="#2a2a34" stroke-width="1.4"/><rect x="0" y="0.4" width="14.6" height="2.6" fill="#2a2a34"/><path d="M4 10.6 L7 5.2 M4 10.6 H7.6 M8.6 5.2 H9.2" fill="none" stroke="#3f7fca" stroke-width="1.2"/><path d="M10 5.6 V9 M10 10 V11.2" stroke="#2a2a34" stroke-width="1.3"/></g>
<g transform="translate(860,101)"><path d="M0.7 2 V12.6 H7.4 M13.6 2 V6" fill="none" stroke="#2a2a34" stroke-width="1.4"/><rect x="0" y="0" width="14.4" height="2.4" fill="#2a2a34"/><rect x="9" y="8.4" width="5.2" height="5.6" fill="none" stroke="#3f7fca" stroke-width="1.2"/><path d="M8 15 L15.6 7 M7.4 8.4 H9 M14.2 14 V15.8" stroke="#3f7fca" stroke-width="1.1"/></g>
<rect x="879.5" y="99.5" width="118" height="20" fill="#f6f6fe" stroke="#d0d0dc" stroke-width="1" rx="0" />
<path d="M987 107.5 h6 l-3 3.5z" fill="#b8b8c4" />
<rect x="1015" y="101" width="2" height="2" fill="#c3c3cd" rx="0" />
<rect x="1015" y="105" width="2" height="2" fill="#c3c3cd" rx="0" />
<rect x="1015" y="109" width="2" height="2" fill="#c3c3cd" rx="0" />
<rect x="1015" y="113" width="2" height="2" fill="#c3c3cd" rx="0" />
<g transform="translate(1021,101)"><path d="M5.6 5.6 Q7.6 2.6 11 4 Q15.4 6 15.2 10 Q15 14.6 10.4 14.8 Q7 14.8 5 12 L3 8.4 Q3.2 7 4.6 7.6z" fill="#f6d9b4" stroke="#c98a4c" stroke-width="1"/><path d="M6.6 6 L9 9.6 M8.6 4.8 L10.8 8.4" stroke="#c98a4c" stroke-width="0.9"/><path d="M3.4 0 V3 H0.6 M5.6 2.4 L3 5 M3 5.2 L3.2 7.6 M3 5 L0.8 5.4 M6.2 1 L5 2.6" fill="none" stroke="#3c9c3c" stroke-width="1.3"/></g>
<g transform="translate(1043,101)"><circle cx="6.4" cy="6.4" r="5.2" fill="#fbfbff" stroke="#2a2a30" stroke-width="1.4"/><path d="M10.2 10.4 L14.6 15" stroke="#2a2a30" stroke-width="2.4" stroke-linecap="round"/></g>
<g transform="translate(1065,101)"><circle cx="7.6" cy="8.4" r="6.8" fill="none" stroke="#2a2a30" stroke-width="1.3"/><circle cx="7.6" cy="8.4" r="4.2" fill="none" stroke="#2a2a30" stroke-width="1.3"/><circle cx="13.4" cy="2.8" r="1.8" fill="#5a9ae0"/></g>
<path d="M53 145 L60 128.5 Q62 125.5 66 125.5 L118 125.5 Q123 125.5 125 129 L133 145 Z" fill="#f1f1fb" />
<path d="M53 145 L60 128.5 Q62 125.5 66 125.5 L118 125.5 Q123 125.5 125 129 L133 145" fill="none" stroke="#d4d4e0" stroke-width="1" />
<g transform="translate(61,127)"><path d="M1.5 0.5 h9.5 l4.5 4.5 v10.5 h-14z" fill="#fff" stroke="#9aa0ad" stroke-width="1"/><path d="M11 0.5 v4.5 h4.5" fill="#e4e7ee" stroke="#9aa0ad" stroke-width="1"/><path d="M2.5 9.5 L6 4.5 L8.5 8 L13 3.5" fill="none" stroke="#2f86d8" stroke-width="1.8" stroke-linejoin="round"/><path d="M2.8 9.5 L6 3.5" stroke="#48b02c" stroke-width="2.2" stroke-linecap="round"/><circle cx="6.6" cy="2.4" r="1.9" fill="#48b02c"/><rect x="0" y="10" width="16" height="6" fill="#1c5fa6"/><text x="8" y="15.3" font-size="6.2" font-weight="bold" fill="#fff" text-anchor="middle" font-family='"Liberation Sans", sans-serif' textLength="13" lengthAdjust="spacingAndGlyphs">DWG</text></g>
<text x="79" y="139" font-size="11.5" fill="#000" font-weight="normal" font-family='"Liberation Sans", sans-serif' text-anchor="start" textLength="47" lengthAdjust="spacingAndGlyphs" >Rysunek1</text>
<path d="M128 145 L135 128.5 Q137 125.5 141 125.5 L293 125.5 Q298 125.5 300 129 L308 145 Z" fill="#f1f1fb" />
<path d="M128 145 L135 128.5 Q137 125.5 141 125.5 L293 125.5 Q298 125.5 300 129 L308 145" fill="none" stroke="#d4d4e0" stroke-width="1" />
<g transform="translate(136,127)"><path d="M1.5 0.5 h9.5 l4.5 4.5 v10.5 h-14z" fill="#fff" stroke="#9aa0ad" stroke-width="1"/><path d="M11 0.5 v4.5 h4.5" fill="#e4e7ee" stroke="#9aa0ad" stroke-width="1"/><path d="M2.5 9.5 L6 4.5 L8.5 8 L13 3.5" fill="none" stroke="#2f86d8" stroke-width="1.8" stroke-linejoin="round"/><path d="M2.8 9.5 L6 3.5" stroke="#48b02c" stroke-width="2.2" stroke-linecap="round"/><circle cx="6.6" cy="2.4" r="1.9" fill="#48b02c"/><rect x="0" y="10" width="16" height="6" fill="#1c5fa6"/><text x="8" y="15.3" font-size="6.2" font-weight="bold" fill="#fff" text-anchor="middle" font-family='"Liberation Sans", sans-serif' textLength="13" lengthAdjust="spacingAndGlyphs">DWG</text></g>
<text x="154" y="139" font-size="11.5" fill="#000" font-weight="normal" font-family='"Liberation Sans", sans-serif' text-anchor="start" textLength="146" lengthAdjust="spacingAndGlyphs" >C:\...\GRE\IMP PET ZW 0.dwg</text>
<path d="M303 145 L310 128.5 Q312 125.5 316 125.5 L443 125.5 Q448 125.5 450 129 L458 145 Z" fill="#f9f9ff" />
<path d="M303 145 L310 128.5 Q312 125.5 316 125.5 L443 125.5 Q448 125.5 450 129 L458 145" fill="none" stroke="#d4d4e0" stroke-width="1" />
<g transform="translate(311,127)"><path d="M1.5 0.5 h9.5 l4.5 4.5 v10.5 h-14z" fill="#fff" stroke="#9aa0ad" stroke-width="1"/><path d="M11 0.5 v4.5 h4.5" fill="#e4e7ee" stroke="#9aa0ad" stroke-width="1"/><path d="M2.5 9.5 L6 4.5 L8.5 8 L13 3.5" fill="none" stroke="#2f86d8" stroke-width="1.8" stroke-linejoin="round"/><path d="M2.8 9.5 L6 3.5" stroke="#48b02c" stroke-width="2.2" stroke-linecap="round"/><circle cx="6.6" cy="2.4" r="1.9" fill="#48b02c"/><rect x="0" y="10" width="16" height="6" fill="#1c5fa6"/><text x="8" y="15.3" font-size="6.2" font-weight="bold" fill="#fff" text-anchor="middle" font-family='"Liberation Sans", sans-serif' textLength="13" lengthAdjust="spacingAndGlyphs">DWG</text></g>
<text x="329" y="139" font-size="11.5" fill="#000" font-weight="bold" font-family='"Liberation Sans", sans-serif' text-anchor="start" textLength="120" lengthAdjust="spacingAndGlyphs" >C:\...\GRE\sinusy.dwg</text>
<path d="M453 145 L460 128.5 Q462 125.5 466 125.5 L594 125.5 Q599 125.5 601 129 L609 145 Z" fill="#f1f1fb" />
<path d="M453 145 L460 128.5 Q462 125.5 466 125.5 L594 125.5 Q599 125.5 601 129 L609 145" fill="none" stroke="#d4d4e0" stroke-width="1" />
<g transform="translate(459,127)"><path d="M1.5 0.5 h9.5 l4.5 4.5 v10.5 h-14z" fill="#fff" stroke="#9aa0ad" stroke-width="1"/><path d="M11 0.5 v4.5 h4.5" fill="#e4e7ee" stroke="#9aa0ad" stroke-width="1"/><path d="M2.5 9.5 L6 4.5 L8.5 8 L13 3.5" fill="none" stroke="#2f86d8" stroke-width="1.8" stroke-linejoin="round"/><path d="M2.8 9.5 L6 3.5" stroke="#48b02c" stroke-width="2.2" stroke-linecap="round"/><circle cx="6.6" cy="2.4" r="1.9" fill="#48b02c"/><rect x="0" y="10" width="16" height="6" fill="#1c5fa6"/><text x="8" y="15.3" font-size="6.2" font-weight="bold" fill="#fff" text-anchor="middle" font-family='"Liberation Sans", sans-serif' textLength="13" lengthAdjust="spacingAndGlyphs">DWG</text></g>
<text x="477" y="139" font-size="11.5" fill="#000" font-weight="normal" font-family='"Liberation Sans", sans-serif' text-anchor="start" textLength="124" lengthAdjust="spacingAndGlyphs" >C:\...\GRE\ZEGASRY.dwg</text>
<path d="M604 145 L611 128.5 Q613 125.5 617 125.5 L793 125.5 Q798 125.5 800 129 L808 145 Z" fill="#f1f1fb" />
<path d="M604 145 L611 128.5 Q613 125.5 617 125.5 L793 125.5 Q798 125.5 800 129 L808 145" fill="none" stroke="#d4d4e0" stroke-width="1" />
<g transform="translate(611,127)"><path d="M1.5 0.5 h9.5 l4.5 4.5 v10.5 h-14z" fill="#fff" stroke="#9aa0ad" stroke-width="1"/><path d="M11 0.5 v4.5 h4.5" fill="#e4e7ee" stroke="#9aa0ad" stroke-width="1"/><path d="M2.5 9.5 L6 4.5 L8.5 8 L13 3.5" fill="none" stroke="#2f86d8" stroke-width="1.8" stroke-linejoin="round"/><path d="M2.8 9.5 L6 3.5" stroke="#48b02c" stroke-width="2.2" stroke-linecap="round"/><circle cx="6.6" cy="2.4" r="1.9" fill="#48b02c"/><rect x="0" y="10" width="16" height="6" fill="#1c5fa6"/><text x="8" y="15.3" font-size="6.2" font-weight="bold" fill="#fff" text-anchor="middle" font-family='"Liberation Sans", sans-serif' textLength="13" lengthAdjust="spacingAndGlyphs">DWG</text></g>
<text x="629" y="139" font-size="11.5" fill="#000" font-weight="normal" font-family='"Liberation Sans", sans-serif' text-anchor="start" textLength="171" lengthAdjust="spacingAndGlyphs" >C:\..._X_211_2_3_15_100521.dwg</text>
<path d="M803 145 L810 128.5 Q812 125.5 816 125.5 L977 125.5 Q982 125.5 984 129 L992 145 Z" fill="#f1f1fb" />
<path d="M803 145 L810 128.5 Q812 125.5 816 125.5 L977 125.5 Q982 125.5 984 129 L992 145" fill="none" stroke="#d4d4e0" stroke-width="1" />
<g transform="translate(810,127)"><path d="M1.5 0.5 h9.5 l4.5 4.5 v10.5 h-14z" fill="#fff" stroke="#9aa0ad" stroke-width="1"/><path d="M11 0.5 v4.5 h4.5" fill="#e4e7ee" stroke="#9aa0ad" stroke-width="1"/><path d="M2.5 9.5 L6 4.5 L8.5 8 L13 3.5" fill="none" stroke="#2f86d8" stroke-width="1.8" stroke-linejoin="round"/><path d="M2.8 9.5 L6 3.5" stroke="#48b02c" stroke-width="2.2" stroke-linecap="round"/><circle cx="6.6" cy="2.4" r="1.9" fill="#48b02c"/><rect x="0" y="10" width="16" height="6" fill="#1c5fa6"/><text x="8" y="15.3" font-size="6.2" font-weight="bold" fill="#fff" text-anchor="middle" font-family='"Liberation Sans", sans-serif' textLength="13" lengthAdjust="spacingAndGlyphs">DWG</text></g>
<text x="828" y="139" font-size="11.5" fill="#000" font-weight="normal" font-family='"Liberation Sans", sans-serif' text-anchor="start" textLength="156" lengthAdjust="spacingAndGlyphs" >C:\...IGI_czołgów 02 12 24.dwg</text>
<path d="M987 145 L994 128.5 Q996 125.5 1000 125.5 L1131 125.5 Q1136 125.5 1138 129 L1146 145 Z" fill="#f1f1fb" />
<path d="M987 145 L994 128.5 Q996 125.5 1000 125.5 L1131 125.5 Q1136 125.5 1138 129 L1146 145" fill="none" stroke="#d4d4e0" stroke-width="1" />
<g transform="translate(994,127)"><path d="M1.5 0.5 h9.5 l4.5 4.5 v10.5 h-14z" fill="#fff" stroke="#9aa0ad" stroke-width="1"/><path d="M11 0.5 v4.5 h4.5" fill="#e4e7ee" stroke="#9aa0ad" stroke-width="1"/><path d="M2.5 9.5 L6 4.5 L8.5 8 L13 3.5" fill="none" stroke="#2f86d8" stroke-width="1.8" stroke-linejoin="round"/><path d="M2.8 9.5 L6 3.5" stroke="#48b02c" stroke-width="2.2" stroke-linecap="round"/><circle cx="6.6" cy="2.4" r="1.9" fill="#48b02c"/><rect x="0" y="10" width="16" height="6" fill="#1c5fa6"/><text x="8" y="15.3" font-size="6.2" font-weight="bold" fill="#fff" text-anchor="middle" font-family='"Liberation Sans", sans-serif' textLength="13" lengthAdjust="spacingAndGlyphs">DWG</text></g>
<text x="1012" y="139" font-size="11.5" fill="#000" font-weight="normal" font-family='"Liberation Sans", sans-serif' text-anchor="start" textLength="126" lengthAdjust="spacingAndGlyphs" >C:\...\regaty 19 9 24.dwg</text>
<path d="M1159 127.5 v9 l-5 -4.5z" fill="#000" />
<path d="M1168.5 127.5 v9 l5 -4.5z" fill="none" stroke="#000" stroke-width="1" />
<path d="M1179 131 h10 l-5 5z" fill="#000" />
<path d="M1193.5 128.5 l8 8 M1201.5 128.5 l-8 8" fill="none" stroke="#000" stroke-width="1.6" />
<g fill="url(#ball)" stroke="#76740c" stroke-width="0.7" stroke-opacity="0.6"><circle cx="135.2" cy="545.6" r="6.6"/><circle cx="142.5" cy="538.4" r="6.6"/><circle cx="149.8" cy="531.4" r="6.6"/><circle cx="157.0" cy="524.7" r="6.6"/><circle cx="164.3" cy="518.5" r="6.6"/><circle cx="171.5" cy="512.9" r="6.6"/><circle cx="178.8" cy="508.0" r="6.6"/><circle cx="186.1" cy="504.0" r="6.6"/><circle cx="193.3" cy="500.9" r="6.6"/><circle cx="200.6" cy="498.8" r="6.6"/><circle cx="207.8" cy="497.7" r="6.6"/><circle cx="215.1" cy="497.8" r="6.6"/><circle cx="222.3" cy="498.9" r="6.6"/><circle cx="229.6" cy="501.0" r="6.6"/><circle cx="236.9" cy="504.2" r="6.6"/><circle cx="244.1" cy="508.3" r="6.6"/><circle cx="251.4" cy="513.2" r="6.6"/><circle cx="258.6" cy="518.8" r="6.6"/><circle cx="265.9" cy="525.1" r="6.6"/><circle cx="273.1" cy="531.8" r="6.6"/><circle cx="280.4" cy="538.8" r="6.6"/><circle cx="287.7" cy="546.0" r="6.6"/><circle cx="294.9" cy="553.2" r="6.6"/><circle cx="302.2" cy="560.2" r="6.6"/><circle cx="309.4" cy="566.8" r="6.6"/><circle cx="316.7" cy="573.0" r="6.6"/><circle cx="323.9" cy="578.6" r="6.6"/><circle cx="331.2" cy="583.4" r="6.6"/><circle cx="338.5" cy="587.4" r="6.6"/><circle cx="345.7" cy="590.5" r="6.6"/><circle cx="353.0" cy="592.5" r="6.6"/><circle cx="360.2" cy="593.5" r="6.6"/><circle cx="367.5" cy="593.4" r="6.6"/><circle cx="374.7" cy="592.3" r="6.6"/><circle cx="382.0" cy="590.0" r="6.6"/><circle cx="389.3" cy="586.8" r="6.6"/><circle cx="396.5" cy="582.7" r="6.6"/><circle cx="403.8" cy="577.7" r="6.6"/><circle cx="411.0" cy="572.0" r="6.6"/><circle cx="418.3" cy="565.7" r="6.6"/><circle cx="425.5" cy="559.0" r="6.6"/><circle cx="432.8" cy="552.0" r="6.6"/><circle cx="440.1" cy="544.8" r="6.6"/><circle cx="447.3" cy="537.6" r="6.6"/><circle cx="454.6" cy="530.6" r="6.6"/><circle cx="461.8" cy="524.0" r="6.6"/><circle cx="469.1" cy="517.8" r="6.6"/><circle cx="476.4" cy="512.3" r="6.6"/><circle cx="483.6" cy="507.5" r="6.6"/><circle cx="490.9" cy="503.6" r="6.6"/><circle cx="498.1" cy="500.6" r="6.6"/><circle cx="505.4" cy="498.6" r="6.6"/><circle cx="512.6" cy="497.7" r="6.6"/><circle cx="519.9" cy="497.8" r="6.6"/><circle cx="527.2" cy="499.0" r="6.6"/><circle cx="534.4" cy="501.3" r="6.6"/><circle cx="541.7" cy="504.6" r="6.6"/><circle cx="548.9" cy="508.8" r="6.6"/><circle cx="556.2" cy="513.8" r="6.6"/><circle cx="563.4" cy="519.5" r="6.6"/><circle cx="570.7" cy="525.8" r="6.6"/><circle cx="578.0" cy="532.6" r="6.6"/><circle cx="585.2" cy="539.6" r="6.6"/><circle cx="592.5" cy="546.8" r="6.6"/><circle cx="599.7" cy="554.0" r="6.6"/><circle cx="607.0" cy="560.9" r="6.6"/><circle cx="614.2" cy="567.6" r="6.6"/><circle cx="621.5" cy="573.7" r="6.6"/><circle cx="628.8" cy="579.2" r="6.6"/><circle cx="636.0" cy="583.9" r="6.6"/><circle cx="643.3" cy="587.8" r="6.6"/><circle cx="650.5" cy="590.8" r="6.6"/><circle cx="657.8" cy="592.7" r="6.6"/><circle cx="665.0" cy="593.6" r="6.6"/><circle cx="672.3" cy="593.3" r="6.6"/><circle cx="679.6" cy="592.1" r="6.6"/><circle cx="686.8" cy="589.7" r="6.6"/><circle cx="694.1" cy="586.4" r="6.6"/><circle cx="701.3" cy="582.2" r="6.6"/><circle cx="708.6" cy="577.1" r="6.6"/><circle cx="715.8" cy="571.4" r="6.6"/><circle cx="723.1" cy="565.0" r="6.6"/><circle cx="730.4" cy="558.2" r="6.6"/><circle cx="737.6" cy="551.2" r="6.6"/><circle cx="744.9" cy="544.0" r="6.6"/><circle cx="752.1" cy="536.8" r="6.6"/><circle cx="759.4" cy="529.9" r="6.6"/><circle cx="766.6" cy="523.3" r="6.6"/><circle cx="773.9" cy="517.2" r="6.6"/><circle cx="781.2" cy="511.7" r="6.6"/><circle cx="788.4" cy="507.0" r="6.6"/><circle cx="795.7" cy="503.2" r="6.6"/><circle cx="802.9" cy="500.3" r="6.6"/><circle cx="810.2" cy="498.4" r="6.6"/><circle cx="817.5" cy="497.6" r="6.6"/><circle cx="824.7" cy="497.9" r="6.6"/><circle cx="832.0" cy="499.2" r="6.6"/><circle cx="839.2" cy="501.6" r="6.6"/><circle cx="846.5" cy="505.0" r="6.6"/><circle cx="853.7" cy="509.3" r="6.6"/><circle cx="861.0" cy="514.4" r="6.6"/><circle cx="868.3" cy="520.2" r="6.6"/><circle cx="875.5" cy="526.6" r="6.6"/><circle cx="882.8" cy="533.4" r="6.6"/><circle cx="890.0" cy="540.4" r="6.6"/><circle cx="897.3" cy="547.6" r="6.6"/><circle cx="904.5" cy="554.8" r="6.6"/><circle cx="911.8" cy="561.7" r="6.6"/><circle cx="919.1" cy="568.3" r="6.6"/><circle cx="926.3" cy="574.3" r="6.6"/><circle cx="933.6" cy="579.8" r="6.6"/><circle cx="940.8" cy="584.4" r="6.6"/><circle cx="948.1" cy="588.2" r="6.6"/><circle cx="955.3" cy="591.0" r="6.6"/><circle cx="962.6" cy="592.8" r="6.6"/><circle cx="969.9" cy="593.6" r="6.6"/><circle cx="977.1" cy="593.2" r="6.6"/><circle cx="984.4" cy="591.8" r="6.6"/><circle cx="991.6" cy="589.4" r="6.6"/><circle cx="998.9" cy="586.0" r="6.6"/><circle cx="1006.1" cy="581.6" r="6.6"/><circle cx="1013.4" cy="576.5" r="6.6"/><circle cx="1020.7" cy="570.7" r="6.6"/><circle cx="1027.9" cy="564.3" r="6.6"/><circle cx="1035.2" cy="557.5" r="6.6"/><circle cx="1042.4" cy="550.4" r="6.6"/></g>
<path d="M245.4 511.6 Q246.4 507.8 252.2 506.6" fill="none" stroke="#1c1c10" stroke-width="0.9" opacity="0.8"/>
<rect x="676" y="373" width="1" height="64" fill="#0c0c52" rx="0" />
<rect x="645" y="405" width="64" height="1" fill="#0c0c52" rx="0" />
<rect x="666.5" y="395.5" width="20" height="20" fill="none" stroke="#0c0c52" stroke-width="1" rx="0" />
<rect x="443.5" y="203.5" width="460" height="151" fill="none" stroke="#001a4d" stroke-width="1" rx="12" opacity="0.05"/>
<rect x="444.5" y="204.5" width="458" height="149" fill="none" stroke="#001a4d" stroke-width="1" rx="11" opacity="0.06"/>
<rect x="445.5" y="205.5" width="456" height="147" fill="none" stroke="#001a4d" stroke-width="1" rx="10" opacity="0.07"/>
<rect x="446.5" y="206.5" width="454" height="145" fill="none" stroke="#001a4d" stroke-width="1" rx="9" opacity="0.09"/>
<rect x="447.5" y="207.5" width="452" height="143" fill="none" stroke="#001a4d" stroke-width="1" rx="8" opacity="0.11"/>
<rect x="448.5" y="208.5" width="450" height="141" fill="none" stroke="#001a4d" stroke-width="1" rx="7" opacity="0.13"/>
<rect x="448.5" y="207.5" width="450" height="140" fill="url(#dlgframe)" stroke="#0b2a60" stroke-width="1" rx="6.5" />
<rect x="449.5" y="208.5" width="448" height="138" fill="none" stroke="#7fbdf2" stroke-width="1" rx="5.5" opacity="0.85"/>
<ellipse cx="478" cy="222" rx="27" ry="11" fill="url(#glow)"/>
<text x="456.5" y="225" font-size="11.5" fill="#0a1830" font-weight="normal" font-family='"Liberation Sans", sans-serif' text-anchor="start" textLength="26.5" lengthAdjust="spacingAndGlyphs" >sinus</text>
<path d="M845.5 208.5 V222.5 Q845.5 226.5 849.5 226.5 H887.5 Q891.5 226.5 891.5 222.5 V208.5" fill="#3f8ade" stroke="#9acbf6" stroke-width="1" fill-opacity="0.55"/>
<path d="M844.5 208.5 V223 Q844.5 227.5 849 227.5 H888 Q892.5 227.5 892.5 223 V208.5" fill="none" stroke="#1558b0" stroke-width="1" opacity="0.6"/>
<rect x="846.5" y="209" width="44" height="8" fill="#8cc0f2" rx="1" opacity="0.28"/>
<path d="M865.3 212 l8.4 8.4 M873.7 212 l-8.4 8.4" fill="none" stroke="#3c4c68" stroke-width="3.8" />
<path d="M865.5 212.2 l8 8 M873.5 212.2 l-8 8" fill="none" stroke="#fff" stroke-width="2.4" />
<rect x="455.5" y="235.5" width="436" height="104" fill="#f0f0f0" stroke="#0f3a7c" stroke-width="1" rx="0" />
<rect x="454.5" y="234.5" width="438" height="106" fill="none" stroke="#66b0f0" stroke-width="1" rx="0" />
<rect x="464" y="245" width="128" height="63" fill="#f0f0f0" rx="0" />
<path d="M464.5 307.5 V245.5 H591" fill="none" stroke="#ffffff" stroke-width="1" />
<path d="M464 307.5 H591.5 V245" fill="none" stroke="#696969" stroke-width="1" />
<path d="M465.5 306.5 H590.5 V246" fill="none" stroke="#a0a0a0" stroke-width="1" />
<text x="508" y="280" font-size="11.5" fill="#000" font-weight="normal" font-family='"Liberation Sans", sans-serif' text-anchor="start" textLength="38" lengthAdjust="spacingAndGlyphs" >generuj</text>
<rect x="600.5" y="244.5" width="62" height="58" fill="#fff" stroke="#a5a5a5" stroke-width="1" rx="0" />
<path d="M601.5 302 V245.5 H662" fill="none" stroke="#8c8c8c" stroke-width="1" />
<path d="M601 302.5 H662.5 V245" fill="none" stroke="#e8e8e8" stroke-width="1" />
<text x="612" y="259" font-size="11.5" fill="#000" font-weight="normal" font-family='"Liberation Sans", sans-serif' text-anchor="start" textLength="6" lengthAdjust="spacingAndGlyphs" >2</text>
<rect x="672.5" y="244.5" width="62" height="58" fill="#fff" stroke="#a5a5a5" stroke-width="1" rx="0" />
<path d="M673.5 302 V245.5 H734" fill="none" stroke="#8c8c8c" stroke-width="1" />
<path d="M673 302.5 H734.5 V245" fill="none" stroke="#e8e8e8" stroke-width="1" />
<text x="684" y="259" font-size="11.5" fill="#000" font-weight="normal" font-family='"Liberation Sans", sans-serif' text-anchor="start" textLength="16" lengthAdjust="spacingAndGlyphs" >0,5</text>
<rect x="744.5" y="244.5" width="62" height="58" fill="#fff" stroke="#a5a5a5" stroke-width="1" rx="0" />
<path d="M745.5 302 V245.5 H806" fill="none" stroke="#8c8c8c" stroke-width="1" />
<path d="M745 302.5 H806.5 V245" fill="none" stroke="#e8e8e8" stroke-width="1" />
<text x="756" y="259" font-size="11.5" fill="#000" font-weight="normal" font-family='"Liberation Sans", sans-serif' text-anchor="start" textLength="16" lengthAdjust="spacingAndGlyphs" >0,3</text>
<rect x="816.5" y="244.5" width="62" height="58" fill="#fff" stroke="#a5a5a5" stroke-width="1" rx="0" />
<path d="M817.5 302 V245.5 H878" fill="none" stroke="#8c8c8c" stroke-width="1" />
<path d="M817 302.5 H878.5 V245" fill="none" stroke="#e8e8e8" stroke-width="1" />
<text x="829" y="259" font-size="11.5" fill="#000" font-weight="normal" font-family='"Liberation Sans", sans-serif' text-anchor="start" textLength="6" lengthAdjust="spacingAndGlyphs" >4</text>
<text x="599" y="327" font-size="11.5" fill="#000" font-weight="normal" font-family='"Liberation Sans", sans-serif' text-anchor="start" textLength="57" lengthAdjust="spacingAndGlyphs" >For [(2)i*pi]</text>
<text x="671" y="327" font-size="11.5" fill="#000" font-weight="normal" font-family='"Liberation Sans", sans-serif' text-anchor="start" textLength="49" lengthAdjust="spacingAndGlyphs" >Step [0.5]</text>
<text x="743" y="327" font-size="11.5" fill="#000" font-weight="normal" font-family='"Liberation Sans", sans-serif' text-anchor="start" textLength="58" lengthAdjust="spacingAndGlyphs" >Height [0.3]</text>
<text x="832" y="327" font-size="11.5" fill="#000" font-weight="normal" font-family='"Liberation Sans", sans-serif' text-anchor="start" textLength="19" lengthAdjust="spacingAndGlyphs" >[ Y ]</text>
<rect x="54" y="895" width="1151" height="14" fill="#efeffb" rx="0" />
<rect x="54" y="895" width="1150" height="1" fill="#10101e" rx="0" />
<rect x="54" y="909" width="1151" height="1" fill="#cfd3dc" rx="0" />
<rect x="1204" y="896" width="1" height="13" fill="#d6d9e2" rx="0" />
<rect x="54.5" y="896.5" width="13" height="11.5" fill="#f5f5fe" stroke="#dedeea" stroke-width="1" rx="0" />
<rect x="68.5" y="896.5" width="13" height="11.5" fill="#f5f5fe" stroke="#dedeea" stroke-width="1" rx="0" />
<rect x="82.5" y="896.5" width="13" height="11.5" fill="#f5f5fe" stroke="#dedeea" stroke-width="1" rx="0" />
<rect x="96.5" y="896.5" width="13" height="11.5" fill="#f5f5fe" stroke="#dedeea" stroke-width="1" rx="0" />
<path d="M60.4 898.4 v9 l-5 -4.5z" fill="#000" />
<rect x="54.6" y="898.4" width="1" height="9" fill="#000" rx="0" />
<path d="M74.8 898.4 v9 l-5.4 -4.5z" fill="#000" />
<path d="M85 898.4 v9 l5.4 -4.5z" fill="#000" />
<path d="M99 898.4 v9 l5 -4.5z" fill="#000" />
<rect x="104.4" y="898.4" width="1.2" height="9" fill="#000" rx="0" />
<path d="M118 895.8 L125.6 907.6 H166.9 L173 895.8 Z" fill="#fbfbff" />
<path d="M118 895.8 L125.6 907.6" fill="none" stroke="#000" stroke-width="1" />
<path d="M166.9 907.6 L173 895.8 M170 901.6 L173.6 907.6" fill="none" stroke="#000" stroke-width="1" />
<path d="M225.8 907.6 L231.6 895.8 M228.6 901.6 L233 907.6" fill="none" stroke="#000" stroke-width="1" />
<path d="M284.8 907.6 L290.9 895.8" fill="none" stroke="#000" stroke-width="1" />
<text x="130" y="906.4" font-size="11.5" fill="#000" font-weight="bold" font-family='"Liberation Sans", sans-serif' text-anchor="start" textLength="32" lengthAdjust="spacingAndGlyphs" >Model</text>
<text x="180" y="906.4" font-size="11.5" fill="#000" font-weight="normal" font-family='"Liberation Sans", sans-serif' text-anchor="start" textLength="37" lengthAdjust="spacingAndGlyphs" >Layout1</text>
<text x="240" y="906.4" font-size="11.5" fill="#000" font-weight="normal" font-family='"Liberation Sans", sans-serif' text-anchor="start" textLength="36.6" lengthAdjust="spacingAndGlyphs" >Layout2</text>
<rect x="54" y="914" width="1150" height="49" fill="#f1f1fb" rx="0" />
<rect x="78" y="915" width="1126" height="31" fill="#fff" rx="0" />
<rect x="78" y="914" width="1126" height="1.4" fill="#ccd3d8" rx="0" />
<rect x="78" y="946" width="1126" height="1" fill="#000" rx="0" />
<rect x="78" y="947" width="1126" height="16" fill="#fff" rx="0" />
<rect x="56.0" y="919" width="2" height="2" fill="#c3c3cd" rx="0" />
<rect x="60.4" y="919" width="2" height="2" fill="#c3c3cd" rx="0" />
<rect x="64.8" y="919" width="2" height="2" fill="#c3c3cd" rx="0" />
<rect x="69.2" y="919" width="2" height="2" fill="#c3c3cd" rx="0" />
<rect x="73.6" y="919" width="2" height="2" fill="#c3c3cd" rx="0" />
<rect x="53" y="914" width="25" height="49" fill="#f0f0fb" rx="0" />
<rect x="56.0" y="919" width="2" height="2" fill="#c3c3cd" rx="0" />
<rect x="60.4" y="919" width="2" height="2" fill="#c3c3cd" rx="0" />
<rect x="64.8" y="919" width="2" height="2" fill="#c3c3cd" rx="0" />
<rect x="69.2" y="919" width="2" height="2" fill="#c3c3cd" rx="0" />
<rect x="73.6" y="919" width="2" height="2" fill="#c3c3cd" rx="0" />
<text x="61.2" y="929" font-size="12.5" fill="#000" font-weight="normal" font-family='"Liberation Sans", sans-serif' text-anchor="start" transform="rotate(90 61.2 929)">P</text>
<rect x="61.2" y="936.4" width="1.3" height="1.3" fill="#000" rx="0" />
<rect x="61.2" y="939.2" width="1.3" height="1.3" fill="#000" rx="0" />
<rect x="61.2" y="942" width="1.3" height="1.3" fill="#000" rx="0" />
<path d="M60.6 948.4 l7 6.6 M67.6 948.4 l-7 6.6" fill="none" stroke="#000" stroke-width="1.7" />
<text x="80" y="928" font-size="11.5" fill="#000" font-weight="normal" font-family='"Liberation Mono", monospace' text-anchor="start" textLength="111" lengthAdjust="spacingAndGlyphs" >Polecenie: _OPEN</text>
<text x="80" y="943" font-size="11.5" fill="#000" font-weight="normal" font-family='"Liberation Mono", monospace' text-anchor="start" textLength="68" lengthAdjust="spacingAndGlyphs" >Polecenie:</text>
<text x="80" y="959" font-size="11.5" fill="#000" font-weight="normal" font-family='"Liberation Mono", monospace' text-anchor="start" textLength="68" lengthAdjust="spacingAndGlyphs" >Polecenie:</text>
<rect x="1134" y="947" width="70" height="15" fill="url(#sbtrack)"/>
<rect x="1134.5" y="947.5" width="13" height="14" fill="url(#sbbtn)" stroke="#b4b4bc"/>
<rect x="1190.5" y="947.5" width="13" height="14" fill="url(#sbbtn)" stroke="#b4b4bc"/>
<path d="M1143.4 951.4 v6.4 l-3.8 -3.2z" fill="#000" />
<path d="M1195.6 951.4 v6.4 l3.8 -3.2z" fill="#000" />
<rect x="1164" y="947" width="25" height="15" fill="url(#sbthumb)"/>
<rect x="0" y="964" width="1280" height="20" fill="#f1f1fb" rx="0" />
<rect x="0.5" y="966.5" width="253" height="16" fill="#f6f6fe" stroke="#222" stroke-width="1" rx="0" />
<rect x="1" y="967" width="252" height="1" fill="#555" rx="0" />
<text x="3" y="978.5" font-size="11.5" fill="#000" font-weight="normal" font-family='"Liberation Sans", sans-serif' text-anchor="start" textLength="104" lengthAdjust="spacingAndGlyphs" >11.1757,  2.9155,  0</text>
<rect x="258.5" y="966.5" width="38" height="18" fill="#f6f6ff" stroke="#dddde9" stroke-width="1" rx="0" />
<text x="264.5" y="978.5" font-size="11.5" fill="#000" font-weight="normal" font-family='"Liberation Sans", sans-serif' text-anchor="start" textLength="26" lengthAdjust="spacingAndGlyphs" >SKOK</text>
<rect x="299.5" y="966.5" width="45" height="18" fill="#f6f6ff" stroke="#dddde9" stroke-width="1" rx="0" />
<text x="304.5" y="978.5" font-size="11.5" fill="#000" font-weight="normal" font-family='"Liberation Sans", sans-serif' text-anchor="start" textLength="35.5" lengthAdjust="spacingAndGlyphs" >SIATKA</text>
<rect x="347.5" y="966.5" width="40" height="18" fill="#f6f6ff" stroke="#dddde9" stroke-width="1" rx="0" />
<text x="353.5" y="978.5" font-size="11.5" fill="#000" font-weight="normal" font-family='"Liberation Sans", sans-serif' text-anchor="start" textLength="28.5" lengthAdjust="spacingAndGlyphs" >ORTO</text>
<rect x="390.5" y="966.5" width="51" height="18" fill="#f6f6ff" stroke="#dddde9" stroke-width="1" rx="0" />
<text x="398.5" y="978.5" font-size="11.5" fill="#000" font-weight="normal" font-family='"Liberation Sans", sans-serif' text-anchor="start" textLength="37" lengthAdjust="spacingAndGlyphs" >BIEGUN</text>
<rect x="444" y="966" width="54" height="18" fill="#f3f3fd" rx="0" />
<path d="M445.2 984 V966.9 H497.5" fill="none" stroke="#1c1c24" stroke-width="1.4" />
<text x="453.5" y="979.5" font-size="11.5" fill="#000" font-weight="normal" font-family='"Liberation Sans", sans-serif' text-anchor="start" textLength="37.5" lengthAdjust="spacingAndGlyphs" >OBJECT</text>
<rect x="500.5" y="966.5" width="74" height="18" fill="#f6f6ff" stroke="#dddde9" stroke-width="1" rx="0" />
<text x="512" y="978.5" font-size="11.5" fill="#000" font-weight="normal" font-family='"Liberation Sans", sans-serif' text-anchor="start" textLength="52.5" lengthAdjust="spacingAndGlyphs" >ŚLEDZENIE</text>
<rect x="577.5" y="966.5" width="79" height="18" fill="#f6f6ff" stroke="#dddde9" stroke-width="1" rx="0" />
<text x="587.5" y="978.5" font-size="11.5" fill="#000" font-weight="normal" font-family='"Liberation Sans", sans-serif' text-anchor="start" textLength="60" lengthAdjust="spacingAndGlyphs" >SZEROKOŚĆ</text>
<rect x="660" y="966" width="50" height="18" fill="#f3f3fd" rx="0" />
<path d="M661.2 984 V966.9 H709.5" fill="none" stroke="#1c1c24" stroke-width="1.4" />
<text x="668" y="979.5" font-size="11.5" fill="#000" font-weight="normal" font-family='"Liberation Sans", sans-serif' text-anchor="start" textLength="34.5" lengthAdjust="spacingAndGlyphs" >MODEL</text>
<rect x="712.5" y="966.5" width="50" height="18" fill="#f6f6ff" stroke="#dddde9" stroke-width="1" rx="0" />
<text x="719" y="978.5" font-size="11.5" fill="#000" font-weight="normal" font-family='"Liberation Sans", sans-serif' text-anchor="start" textLength="36" lengthAdjust="spacingAndGlyphs" >TABLET</text>
<rect x="765.5" y="966.5" width="31" height="18" fill="#f6f6ff" stroke="#dddde9" stroke-width="1" rx="0" />
<text x="771" y="978.5" font-size="11.5" fill="#000" font-weight="normal" font-family='"Liberation Sans", sans-serif' text-anchor="start" textLength="20" lengthAdjust="spacingAndGlyphs" >DYN</text>
<text x="802.5" y="978.5" font-size="11.5" fill="#000" font-weight="normal" font-family='"Liberation Sans", sans-serif' text-anchor="start" textLength="40" lengthAdjust="spacingAndGlyphs" >Gotowy</text>
<rect x="1234.5" y="967.5" width="20" height="15" fill="#f4f4fd" stroke="#dcdce8" stroke-width="1" rx="0" />
<path d="M1265.8 978 h8 l-4 4.2z" fill="#000" />
<rect x="5.0" y="137" width="2" height="2" fill="#c3c3cd" rx="0" />
<rect x="9.5" y="137" width="2" height="2" fill="#c3c3cd" rx="0" />
<rect x="14.0" y="137" width="2" height="2" fill="#c3c3cd" rx="0" />
<rect x="18.5" y="137" width="2" height="2" fill="#c3c3cd" rx="0" />
<g transform="translate(5,145)"><path d="M15.8 2.8 H6.8 L1.6 12" fill="none" stroke="#2a2a34" stroke-width="1.25"/><path d="M0.3 14 L0.9 9.8 L4.2 11.7z" fill="#2a2a34"/></g>
<g transform="translate(5,167)"><path d="M15.8 2.8 H6.8 L1.6 12" fill="none" stroke="#2a2a34" stroke-width="1.25"/><path d="M0.3 14 L0.9 9.8 L4.2 11.7z" fill="#2a2a34"/><path d="M13.3 9.4 V14.4 M10.8 11.9 H15.8" stroke="#3f9d70" stroke-width="1"/></g>
<g transform="translate(5,189)"><path d="M15.8 2.8 H6.8 L1.6 12" fill="none" stroke="#2a2a34" stroke-width="1.25"/><path d="M0.3 14 L0.9 9.8 L4.2 11.7z" fill="#2a2a34"/><path d="M11.2 9.4 L15.4 13.6 M15.4 9.4 L11.2 13.6" stroke="#e0583c" stroke-width="1"/></g>
<rect x="6" y="210" width="14" height="1" fill="#d3d3de" rx="0" />
<g transform="translate(5,217)"><path d="M15.8 2.8 H6.8 L1.6 12" fill="none" stroke="#2a2a34" stroke-width="1.25"/><path d="M0.3 14 L0.9 9.8 L4.2 11.7z" fill="#2a2a34"/><path d="M14.4 5.4 L16.2 7 L10 13.4 L7.2 14.2 L8.2 11.8z" fill="#5a5a62"/></g>
<rect x="30.0" y="137" width="2" height="2" fill="#c3c3cd" rx="0" />
<rect x="34.5" y="137" width="2" height="2" fill="#c3c3cd" rx="0" />
<rect x="39.0" y="137" width="2" height="2" fill="#c3c3cd" rx="0" />
<rect x="43.5" y="137" width="2" height="2" fill="#c3c3cd" rx="0" />
<g transform="translate(31,145)"><path d="M2 2 L14 14" stroke="#2a2a34" stroke-width="1.15"/><rect x="0.8" y="0.8" width="2" height="2" fill="#2f64a8"/><rect x="13.2" y="13.2" width="2" height="2" fill="#2f64a8"/></g>
<g transform="translate(31,167)"><path d="M2 2 L14.2 13.6" stroke="#2f64a8" stroke-width="1"/><path d="M1.6 4.4 V1.6 H4.6 M11.6 14 H14.6 V11" fill="none" stroke="#2f64a8" stroke-width="1.1"/><rect x="5.3" y="5.1" width="1.8" height="1.8" fill="#2f64a8"/><rect x="8.9" y="8.5" width="1.8" height="1.8" fill="#2f64a8"/></g>
<g transform="translate(31,189)"><path d="M8 3.2 Q1.4 3 1.4 8 Q1.6 12.6 6 13.2 H15" fill="none" stroke="#2a2a34" stroke-width="1.2" stroke-dasharray="3.4 1.6"/><rect x="7.4" y="2.2" width="2" height="2" fill="#2f64a8"/><rect x="0.3999999999999999" y="7.0" width="2" height="2" fill="#2f64a8"/><rect x="5.0" y="12.2" width="2" height="2" fill="#2f64a8"/><rect x="9.6" y="12.2" width="2" height="2" fill="#2f64a8"/><rect x="14.0" y="12.2" width="2" height="2" fill="#2f64a8"/></g>
<g transform="translate(31,211)"><path d="M8 2 L15 7.4 L12.3 14.2 H3.7 L1 7.4z" fill="none" stroke="#2a2a34" stroke-width="1.2" stroke-linejoin="round"/></g>
<g transform="translate(31,233)"><rect x="2.4" y="3.2" width="11.4" height="9" fill="none" stroke="#2a2a34" stroke-width="1.2"/><rect x="1.2000000000000002" y="2.0" width="2" height="2" fill="#2f64a8"/><rect x="13.0" y="11.4" width="2" height="2" fill="#2f64a8"/></g>
<g transform="translate(31,255)"><path d="M0.8 13.8 Q1.4 2.4 14 1" fill="none" stroke="#2a2a34" stroke-width="1.2" stroke-dasharray="4 1.8"/><rect x="-0.19999999999999996" y="12.8" width="2" height="2" fill="#2f64a8"/><rect x="3.0" y="3.8" width="2" height="2" fill="#2f64a8"/><rect x="13.0" y="0.0" width="2" height="2" fill="#2f64a8"/></g>
<g transform="translate(31,277)"><path d="M14.2 10.4 A6.7 6.7 0 1 1 14.2 5.6" fill="none" stroke="#2a2a34" stroke-width="1.15"/><path d="M8 8 H14.8" stroke="#2a2a34" stroke-width="1.2" stroke-dasharray="2.4 1.4"/><rect x="6.9" y="7.0" width="2" height="2" fill="#2f64a8"/><rect x="13.8" y="7.0" width="2" height="2" fill="#2f64a8"/></g>
<g transform="translate(31,299)"><path d="M4 8 Q0 8 0.6 5.4 Q1.4 3.4 3.6 4 Q4.2 1.6 7 2 Q8.6 2.2 9.4 3.6 Q12.4 2.6 13.4 5 Q16.2 5.6 15.4 8 Q14.6 9.8 12.6 9.6 Q12 12 9.6 11.6 Q8 13.4 6.2 11.8 Q3.6 12 4 8z" fill="none" stroke="#2a2a34" stroke-width="1.6" stroke-linejoin="round" transform="translate(0,1)"/></g>
<g transform="translate(31,321)"><path d="M0.8 10.8 Q1.2 5.6 4.4 5.8 Q6.6 6 8.4 9 Q10.6 12 12.6 10.6 Q14.8 9 15.2 5.2" fill="none" stroke="#2a2a34" stroke-width="1.2"/><rect x="-0.19999999999999996" y="10.0" width="2" height="2" fill="#2f64a8"/><rect x="7.300000000000001" y="8.0" width="2" height="2" fill="#2f64a8"/><rect x="14.2" y="4.0" width="2" height="2" fill="#2f64a8"/></g>
<g transform="translate(31,343)"><ellipse cx="7.9" cy="8" rx="7.2" ry="6" fill="none" stroke="#2a2a34" stroke-width="1.15" stroke-dasharray="5.2 1.6" stroke-dashoffset="2.6"/><rect x="6.9" y="1.0" width="2" height="2" fill="#2f64a8"/><rect x="-0.30000000000000004" y="7.0" width="2" height="2" fill="#2f64a8"/><rect x="14.1" y="7.0" width="2" height="2" fill="#2f64a8"/><rect x="6.9" y="13.0" width="2" height="2" fill="#2f64a8"/></g>
<g transform="translate(31,365)"><path d="M7 1.8 A6.4 6.4 0 1 0 14 10" fill="none" stroke="#2a2a34" stroke-width="1.15"/><rect x="6.2" y="0.6000000000000001" width="2" height="2" fill="#2f64a8"/><rect x="13.2" y="8.8" width="2" height="2" fill="#2f64a8"/></g>
<g transform="translate(31,387)"><path d="M3.6 4.6 V0.8 H15.4 V11.4 H11.6" fill="none" stroke="#2a2a34" stroke-width="1.2"/><path d="M4.6 5.8 H0.8 V12.4 H3" fill="none" stroke="#2a2a34" stroke-width="1.2"/><path d="M9.4 5.8 H11.4 V8.4" fill="none" stroke="#2a2a34" stroke-width="1.15"/><circle cx="7" cy="12.2" r="3.3" fill="#f4f4fd" stroke="#2a2a34" stroke-width="1.15"/><path d="M5.6 5.2 H9.6 V3 L13.2 6.2 L9.6 9.4 V7.2 H5.6z" fill="#3f9d70"/></g>
<g transform="translate(31,409)"><path d="M10 1.8 H3.6 M1.4 4 V10.8 H4.6" fill="none" stroke="#2a2a34" stroke-width="1.2"/><circle cx="10.2" cy="10.2" r="4.9" fill="#f6f6fe" stroke="#2a2a34" stroke-width="1.2"/><rect x="0.3999999999999999" y="0.8" width="2" height="2" fill="#2f64a8"/></g>
<g transform="translate(31,431)"><rect x="6.9" y="3.0" width="2" height="2" fill="#2f64a8"/><rect x="2.0" y="11.0" width="2" height="2" fill="#2f64a8"/><rect x="12.0" y="11.0" width="2" height="2" fill="#2f64a8"/></g>
<g transform="translate(31,453)"><defs><pattern id="hx" width="2" height="2" patternUnits="userSpaceOnUse"><rect width="2" height="2" fill="#6f98d2"/><rect width="1" height="1" fill="#c4d8f2"/><rect x="1" y="1" width="1" height="1" fill="#c4d8f2"/></pattern></defs><rect x="1.3" y="1.6" width="13.6" height="13" rx="1.6" fill="#fff" stroke="#2a2a34" stroke-width="1.15"/><rect x="3" y="3.2" width="10.2" height="9.8" fill="url(#hx)"/></g>
<g transform="translate(31,475)"><defs><linearGradient id="gg" x1="0" y1="0" x2="0" y2="1"><stop offset="0" stop-color="#dbe7f6"/><stop offset="1" stop-color="#5c89c6"/></linearGradient></defs><rect x="1.3" y="1.4" width="13.6" height="13.2" rx="1.6" fill="#fff" stroke="#2a2a34" stroke-width="1.15"/><rect x="3" y="3" width="10.2" height="10" fill="url(#gg)"/></g>
<g transform="translate(31,497)"><rect x="2.3" y="3.3" width="11.6" height="9.2" fill="#fff" stroke="#2a2a34" stroke-width="1.15"/><circle cx="8" cy="8" r="2.6" fill="none" stroke="#2a2a34" stroke-width="1.2"/></g>
<g transform="translate(31,519)"><path d="M8.5 0.6 L12 5 H5z M5.4 5 H11.6 L12.8 10.6 H4.2z M3.6 10.6 H13.4 L15.6 14.4 H1.4z" fill="#fff" stroke="#2a2a34" stroke-width="1.15" stroke-linejoin="round"/></g>
<g transform="translate(31,541)"><rect x="0.2" y="1.2" width="15.6" height="14.4" fill="#4270a8"/><rect x="1.2" y="5" width="2.7" height="2.7" fill="#fff"/><rect x="4.9" y="5" width="2.7" height="2.7" fill="#fff"/><rect x="8.6" y="5" width="2.7" height="2.7" fill="#fff"/><rect x="12.3" y="5" width="2.7" height="2.7" fill="#fff"/><rect x="1.2" y="8.6" width="2.7" height="2.7" fill="#fff"/><rect x="4.9" y="8.6" width="2.7" height="2.7" fill="#fff"/><rect x="8.6" y="8.6" width="2.7" height="2.7" fill="#fff"/><rect x="12.3" y="8.6" width="2.7" height="2.7" fill="#fff"/><rect x="1.2" y="12.2" width="2.7" height="2.7" fill="#fff"/><rect x="4.9" y="12.2" width="2.7" height="2.7" fill="#fff"/><rect x="8.6" y="12.2" width="2.7" height="2.7" fill="#fff"/><rect x="12.3" y="12.2" width="2.7" height="2.7" fill="#fff"/><rect x="0.2" y="7.7" width="15.6" height="0.9" fill="#b08a8c" opacity="0.55"/><rect x="0.2" y="11.3" width="15.6" height="0.9" fill="#b08a8c" opacity="0.55"/></g>
<g transform="translate(31,563)"><rect x="1.3" y="1.2" width="14.2" height="13.4" fill="#fff" stroke="#2a2a34" stroke-width="1.15"/><path d="M3.2 8.6 L5.2 3.4 L7.2 8.6 M4 6.8 H6.4" fill="none" stroke="#3f7fca" stroke-width="1.2"/><path d="M8.4 8.4 H13.6 M3 10.4 H13.6 M3 12.4 H13.6" stroke="#2a2a34" stroke-width="1"/></g>
<path d="M45.2 405 H49.4 V400.8z" fill="#000" />
<rect x="52" y="145" width="1" height="750" fill="#c6c6d0" rx="0" />
<rect x="53" y="145" width="1" height="750" fill="#fdfdff" rx="0" />
<rect x="54" y="145" width="1151" height="1" fill="#eef5ff" rx="0" />
<rect x="1204" y="145" width="1" height="750" fill="#fdfdff" rx="0" />
<rect x="1205" y="145" width="1" height="765" fill="#c9ccd6" rx="0" />
<rect x="1208.5" y="124.5" width="20" height="77" rx="3" fill="url(#kal)" stroke="#e2e2ec"/>
<text x="1213.6" y="137.6" font-size="12" fill="#000" font-weight="normal" font-family='"Liberation Sans", sans-serif' text-anchor="start" textLength="54" lengthAdjust="spacingAndGlyphs" transform="rotate(90 1213.6 137.6)">Kalkulator</text>
<rect x="1208.5" y="203.5" width="19" height="24" fill="#f4f4fd" stroke="#dadae6" stroke-width="1" rx="2" />
<rect x="1233.0" y="128" width="2" height="2" fill="#c3c3cd" rx="0" />
<rect x="1237.5" y="128" width="2" height="2" fill="#c3c3cd" rx="0" />
<rect x="1242.0" y="128" width="2" height="2" fill="#c3c3cd" rx="0" />
<rect x="1246.5" y="128" width="2" height="2" fill="#c3c3cd" rx="0" />
<g transform="translate(1233,136)"><g transform="rotate(-35 8 8)"><rect x="0.6" y="5" width="15" height="6.4" rx="1.8" fill="#fff" stroke="#2a2a34" stroke-width="1.15"/><rect x="8.6" y="6.6" width="5" height="3.2" rx="0.6" fill="#3f7fca"/></g></g>
<g transform="translate(1233,158)"><rect x="0.6" y="0.8" width="5.4" height="5" fill="#fff" stroke="#2a2a34" stroke-width="1.2"/><path d="M9 2.6 Q12.6 3 12.6 7.4" fill="none" stroke="#3f7fca" stroke-width="1.8"/><path d="M10 6.6 L12.8 10 L15.4 6.4z" fill="#3f7fca"/><path d="M9 10.6 H7.6 V15.2 H9" fill="none" stroke="#2a2a34" stroke-width="1.2"/><path d="M10.6 15.2 H15.8 V10.4" fill="none" stroke="#8c3a8c" stroke-width="1.2"/></g>
<g transform="translate(1233,180)"><path d="M6.2 3.6 V12.4 H0.8z" fill="#fff" stroke="#4a4a52" stroke-width="1.2" stroke-linejoin="round"/><path d="M8.6 0.4 V15.6" stroke="#4a4a52" stroke-width="1.2"/><path d="M10.6 3.2 L15.8 12.6 H10.6z" fill="#8c3a8c"/></g>
<g transform="translate(1233,202)"><path d="M14.8 14.4 H5 Q0.4 14.4 0.6 10.6 Q0.8 7.6 4.2 7.2 Q4.2 1.2 8.6 1.2 Q12.4 1.4 12.4 5.6 V7.4 H14.8" fill="none" stroke="#4a4a52" stroke-width="1.15"/><path d="M14.8 11.8 H5.4 Q3 11.8 3.2 10.4 Q3.6 9.2 6.6 9.4 Q6.4 4 8.6 3.8 Q10 4 10 6 V9.8 H14.8" fill="none" stroke="#8c3a8c" stroke-width="1.1"/></g>
<g transform="translate(1233,224)"><rect x="1" y="1" width="5.6" height="5.6" fill="#8c3a8c"/><rect x="8.2" y="1" width="5.6" height="5.6" fill="#857b88"/><rect x="1" y="8.2" width="5.6" height="5.6" fill="#857b88"/><rect x="8.2" y="8.2" width="5.6" height="5.6" fill="#857b88"/></g>
<g transform="translate(1233,246)"><path d="M7.5 1.6 V15.4 M0.6 8.5 H14.4" stroke="#4a4a52" stroke-width="1.15"/><path d="M5.2 3.6 L7.5 0.8 L9.8 3.6z M5.2 13.4 L7.5 16.2 L9.8 13.4z M2.8 6.2 L0 8.5 L2.8 10.8z M12.2 6.2 L15 8.5 L12.2 10.8z" fill="#4a4a52"/></g>
<g transform="translate(1233,268)"><path d="M12.4 5 A6 6 0 1 1 7 2.8" fill="none" stroke="#4a4a52" stroke-width="1.15"/><path d="M6.6 0.2 L10.8 2.6 L7 5.4z" fill="#2a2a34"/></g>
<g transform="translate(1233,290)"><path d="M7.6 13.6 H1.3 V1.8 H13.6 V7.2" fill="none" stroke="#2a2a34" stroke-width="1.2"/><rect x="8.6" y="8.4" width="5" height="5" fill="none" stroke="#2a2a34" stroke-width="1.2" stroke-dasharray="2 1.2"/><path d="M9.8 9.6 L12.4 12.2 M12.4 10.2 V12.2 H10.4" fill="none" stroke="#2a2a34" stroke-width="1"/></g>
<g transform="translate(1233,312)"><path d="M1.6 2 L14.2 14" stroke="#2a2a34" stroke-width="1.15" stroke-dasharray="3 1.6"/><rect x="0.5" y="0.8" width="2" height="2" fill="#8c3a8c"/><rect x="13.3" y="13.2" width="2" height="2" fill="#8c3a8c"/></g>
<g transform="translate(1233,334)"><path d="M1.4 1.8 V14.6 H14.8 V1.8" fill="none" stroke="#2a2a34" stroke-width="1.15"/><path d="M1.4 1.8 H14.8" stroke="#2a2a34" stroke-width="1.2" stroke-dasharray="2 1.4"/><path d="M8 12.6 V7.4" stroke="#8c3a8c" stroke-width="1.8"/><path d="M4.8 8.8 L8 5.2 L11.2 8.8" fill="none" stroke="#8c3a8c" stroke-width="1.8"/></g>
<g transform="translate(1233,356)"><path d="M0.2 6.8 H5.6" stroke="#2a2a34" stroke-width="1.15"/><path d="M9.6 6.8 H15" stroke="#8c3a8c" stroke-width="1.2" stroke-dasharray="2 1.4"/><path d="M9.6 2.2 L3.6 14.8" stroke="#4a4a52" stroke-width="1.5"/></g>
<g transform="translate(1233,378)"><path d="M0.2 7.4 H10" stroke="#8c3a8c" stroke-width="1.2" stroke-dasharray="2.2 1.4"/><path d="M14.8 2.4 L9 14.8" stroke="#4a4a52" stroke-width="1.5"/></g>
<g transform="translate(1233,400)"><path d="M6 2.6 H0.8 V14 H14.6 V2.6 H10" fill="none" stroke="#2a2a34" stroke-width="1.15"/><rect x="7.0" y="1.0" width="2" height="2" fill="#2f64a8"/></g>
<g transform="translate(1233,422)"><path d="M1.8 2.6 H0.8 V14.2 H14.6 V2.6 H13.4" fill="none" stroke="#2a2a34" stroke-width="1.15"/><rect x="2.8" y="1.2000000000000002" width="2" height="2" fill="#2f64a8"/><rect x="10.2" y="1.2000000000000002" width="2" height="2" fill="#2f64a8"/></g>
<g transform="translate(1233,444)"><path d="M0.2 3.6 H5 M2.8 1 L5.6 3.6 L2.8 6.2 M15 3.6 H10.4 M12.4 1 L9.6 3.6 L12.4 6.2" fill="none" stroke="#3f9d70" stroke-width="1.5"/><rect x="7.2" y="3.2" width="1" height="1" fill="#2a2a34"/><path d="M2 7 L0.8 8 V14.6 M13.4 7 L14.6 8 V14.6" fill="none" stroke="#2a2a34" stroke-width="1.15"/></g>
<g transform="translate(1233,466)"><path d="M13.2 2 V14.4 H1.4 V13" fill="none" stroke="#2a2a34" stroke-width="1.15"/><path d="M1.4 11.6 L11.2 2" stroke="#8c3a8c" stroke-width="1.2"/><path d="M11 2.2 H13.2" stroke="#2a2a34" stroke-width="1.15"/></g>
<g transform="translate(1233,488)"><path d="M13.2 2 V14.4 H1.4 V13" fill="none" stroke="#2a2a34" stroke-width="1.15"/><path d="M1.6 11.8 Q2 2.8 11.2 2.2" fill="none" stroke="#8c3a8c" stroke-width="1.2"/><path d="M11 2.2 H13.2" stroke="#2a2a34" stroke-width="1.15"/></g>
<g transform="translate(1233,510)"><circle cx="5.6" cy="9" r="5.4" fill="#4270a8"/><path d="M8.2 4.4 Q10 1.4 11.6 3.4 L12.6 5.6" fill="none" stroke="#4270a8" stroke-width="1.15"/><rect x="7.6" y="3.6" width="2.4" height="2.4" fill="#4270a8" transform="rotate(35 8.8 4.8)"/><path d="M11.2 6.2 L15.8 10.8 M15.8 6.2 L11.2 10.8 M13.5 5.6 V11.4 M10.8 8.5 H16" stroke="#f4c430" stroke-width="1.15"/></g>
<rect x="1234" y="531" width="14" height="1" fill="#d3d3de" rx="0" />
<g transform="translate(1233,538)"><path d="M0.6 0.6 H12.4 V6 M0.6 0.6 V13.6 H6.4 M4 0.6 V13.6 M0.6 7.6 H4 M4 4 H12.4 M8.6 0.6 V4" fill="none" stroke="#3f7fca" stroke-width="1.1"/><rect x="3" y="3.4" width="4.4" height="4.2" fill="#f4f7fd" stroke="#3f7fca" stroke-width="1.1"/><path d="M7 9 L9.4 7 L14.2 12.6 Q14.8 14.4 13 15.2 Q11.6 15.4 11 14.4z" fill="#3f7fca"/><path d="M11.2 8.2 L14.2 5.6 M12.6 9.4 L15.6 7.2 M13.2 6 L14.6 8.2" stroke="#4c4c54" stroke-width="1.5"/></g>
<rect x="1259.0" y="128" width="2" height="2" fill="#c3c3cd" rx="0" />
<rect x="1263.5" y="128" width="2" height="2" fill="#c3c3cd" rx="0" />
<rect x="1268.0" y="128" width="2" height="2" fill="#c3c3cd" rx="0" />
<rect x="1272.5" y="128" width="2" height="2" fill="#c3c3cd" rx="0" />
<g transform="translate(1259,136)"><rect x="6.6" y="6.8" width="8.8" height="8.6" fill="#fff" stroke="#2a2a34" stroke-width="1.2"/><rect x="0" y="0.4" width="11" height="10" fill="#f8c424"/></g>
<rect x="1260" y="157" width="14" height="1" fill="#d3d3de" rx="0" />
<g transform="translate(1259,163)"><rect x="1.2" y="1.4" width="12.6" height="11.6" rx="2" fill="#fff" stroke="#2a2a34" stroke-width="1.15"/><path d="M2.6 2.8 H12.4 L3 12 z" fill="url(#hx)"/><rect x="8.4" y="8.4" width="6.4" height="5.6" fill="#f0f0fb" opacity="0.0"/><path d="M13.4 1.6 Q14.6 0.4 15.6 1.6 Q16.4 2.6 15.4 3.6 L6 13 L3.2 14.6 L4.4 11.4z" fill="#3f7fca"/><path d="M12.4 3.4 L14 5" stroke="#f2f4fb" stroke-width="0.8"/></g>
<g transform="translate(1259,185)"><path d="M6.4 7.4 Q0.4 7 0.8 11 Q1.2 14.2 5 14.2" fill="none" stroke="#2a2a34" stroke-width="1.2"/><path d="M8 14.2 H14.4" stroke="#2a2a34" stroke-width="1.2"/><g transform="translate(0,0.6)"><path d="M13.4 1.6 Q14.6 0.4 15.6 1.6 Q16.4 2.6 15.4 3.6 L6 13 L3.2 14.6 L4.4 11.4z" fill="#3f7fca"/><path d="M12.4 3.4 L14 5" stroke="#f2f4fb" stroke-width="0.8"/></g></g>
<g transform="translate(1259,207)"><path d="M0.6 11.6 Q1.2 7 3.8 7.2 Q5.2 7.4 6 9 M9.6 12.4 Q11.6 14.6 13.4 12.6 Q14.6 11 15 8.4" fill="none" stroke="#e0694a" stroke-width="1.2"/><path d="M13.4 1.6 Q14.6 0.4 15.6 1.6 Q16.4 2.6 15.4 3.6 L6 13 L3.2 14.6 L4.4 11.4z" fill="#3f7fca"/><path d="M12.4 3.4 L14 5" stroke="#f2f4fb" stroke-width="0.8"/></g>
<g transform="translate(1259,229)"><rect x="0.7" y="1.2" width="3.6" height="3.6" rx="0.8" fill="#fff" stroke="#4270a8" stroke-width="1.5"/><rect x="0.7" y="5.8" width="3.6" height="3.6" rx="0.8" fill="#fff" stroke="#4270a8" stroke-width="1.5"/><rect x="0.7" y="10.4" width="3.6" height="3.6" rx="0.8" fill="#fff" stroke="#4270a8" stroke-width="1.5"/><path d="M6.4 3 H15.4 M6.4 8 H11 M6.4 12.6 H15.4" stroke="#9a9aa4" stroke-width="1"/><path d="M14.6 4.4 L15.8 5.6 L9.6 11.8 L7.6 12.8 L8.4 10.6z" fill="#3f7fca"/><path d="M13.6 9.2 V12 M12.2 10.6 H15" stroke="#2a2a34" stroke-width="0.9"/></g>
<g transform="translate(1259,251)"><path d="M0.8 14 L6.4 1.6 L11 12 M3 9.4 H9.4" fill="none" stroke="#3f7fca" stroke-width="1.7"/><path d="M14.6 5.6 L16 7 L8.4 14.6 L5.8 15.8 L7 13.2z" fill="#6a6a72"/><path d="M13.4 6.8 L14.8 8.2" stroke="#f2f4fb" stroke-width="0.7"/></g>
</svg>
</div></body></html>
